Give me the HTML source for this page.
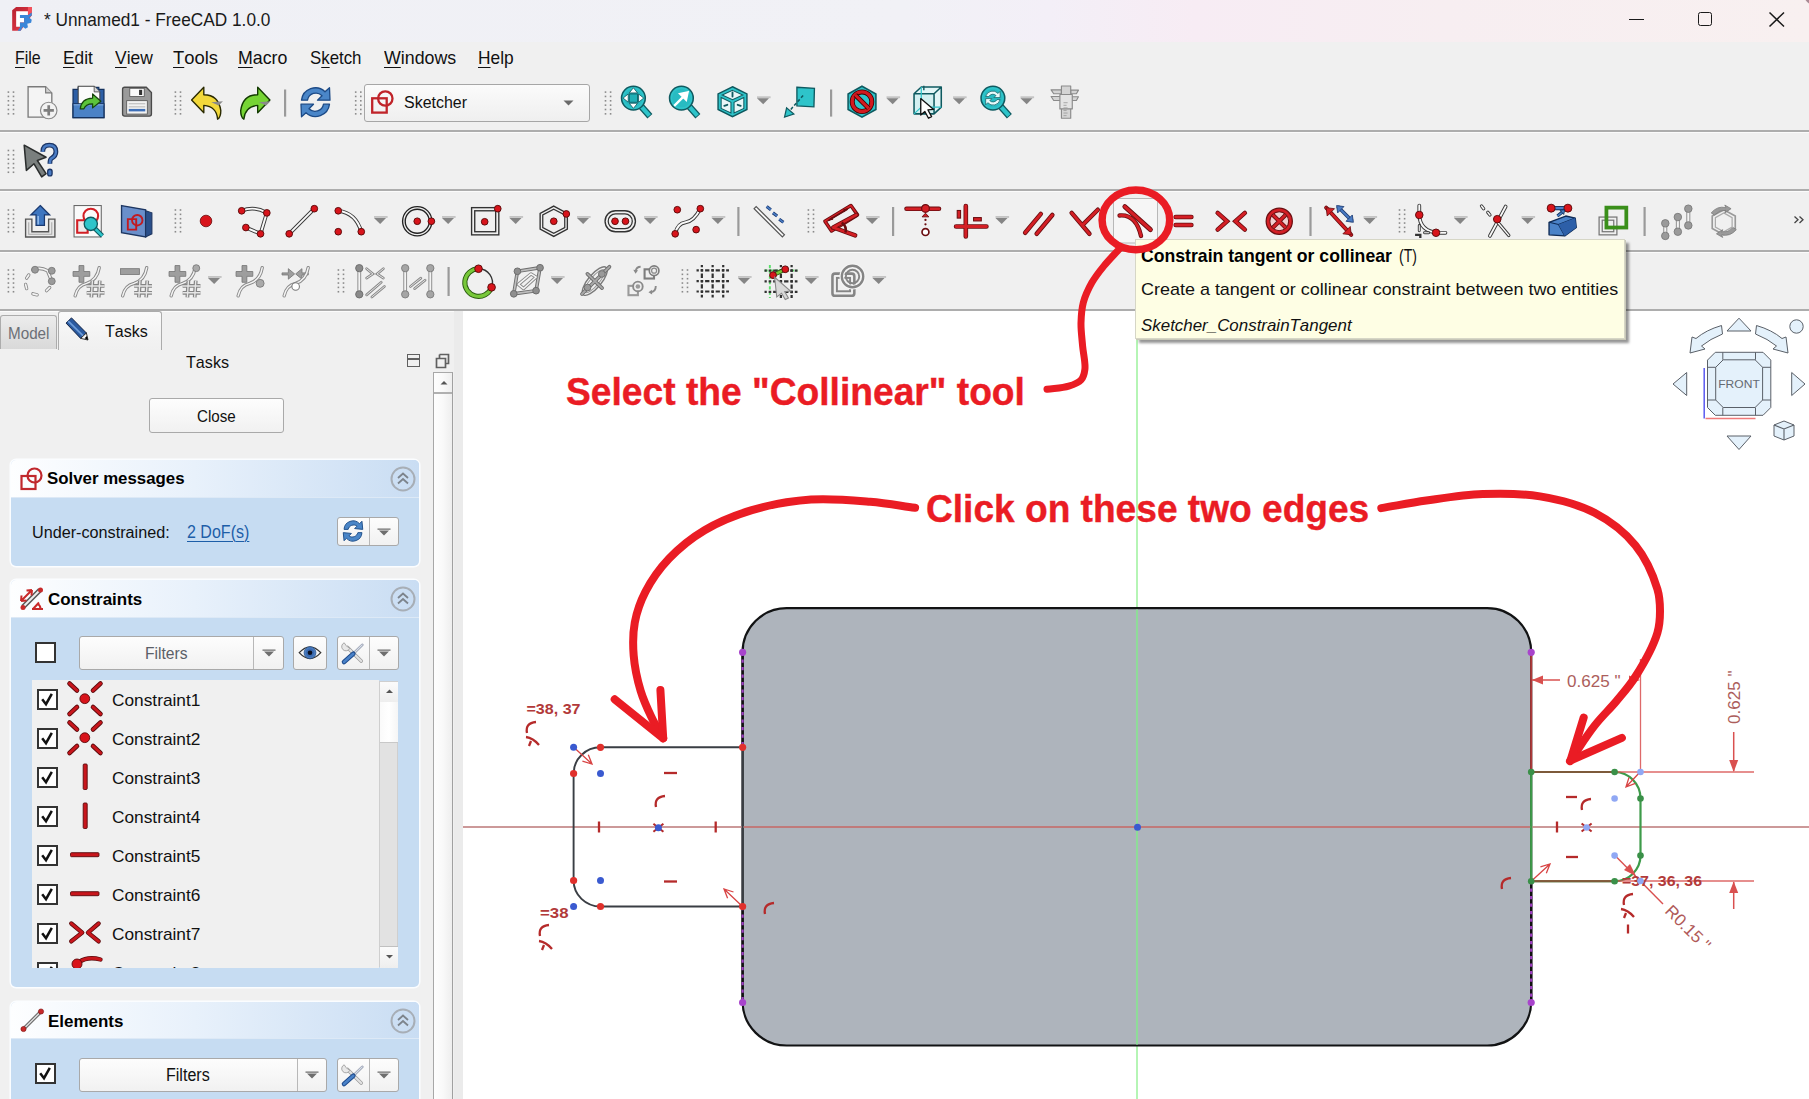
<!DOCTYPE html>
<html><head><meta charset="utf-8"><style>
html,body{margin:0;padding:0}
body{width:1809px;height:1099px;position:relative;overflow:hidden;background:#f0f0f0;font-family:"Liberation Sans",sans-serif}
svg{overflow:visible}
</style></head><body>
<div style="position:absolute;left:0;top:0;width:1809px;height:42px;background:linear-gradient(90deg,#eff0f5 0%,#f1f1f6 50%,#f3eff7 58%,#f7ecf4 66%,#f7eef1 80%,#f8f0f0 100%)"></div>
<svg style="position:absolute;left:0;top:0" width="40" height="40" viewBox="0 0 40 40">
<defs><linearGradient id="lgr" x1="0" y1="0" x2="1" y2="1"><stop offset="0" stop-color="#b8202e"/><stop offset="0.55" stop-color="#d23240"/><stop offset="1" stop-color="#ff5a64"/></linearGradient></defs>
<polygon points="12.17,10.28 16.15,7.10 31.75,7.10 31.75,15.38 20.61,30.66 12.17,30.66" fill="url(#lgr)"/>
<polygon points="27.93,7.10 31.75,7.10 31.75,12.51 27.93,15.06" fill="#f5505a"/>
<polygon points="16.15,11.24 27.93,11.24 27.93,15.06 19.97,15.06 19.97,17.92 24.11,17.92 24.11,22.38 19.97,22.38 19.97,26.84 16.15,26.84" fill="#ffffff"/>
<polygon points="19.97,15.06 28.25,15.06 31.75,12.51 31.75,15.38 29.20,17.61 31.75,19.83 31.11,22.70 27.29,23.66 27.93,27.16 25.38,28.75 22.83,26.84 20.61,30.66 17.74,30.66 19.97,27.48 19.97,22.38 24.11,22.38 24.11,17.92 19.97,17.92" fill="#3a86d8"/>
</svg>
<div style="position:absolute;left:43.50px;top:11.13px;font-family:'Liberation Sans',sans-serif;font-size:18.02px;line-height:1;font-weight:normal;font-style:normal;color:#1a1a1a;white-space:pre;font-kerning:none;transform:scaleX(0.9581);transform-origin:0 0;">* Unnamed1 - FreeCAD 1.0.0</div>
<div style="position:absolute;left:1629px;top:18.6px;width:15px;height:1.3px;background:#1a1a1a"></div><svg style="position:absolute;left:1804px;top:0" width="5" height="5"><path d="M1.5 0 H5 V3.5 Q3 2 1.5 0Z" fill="#a88a94"/></svg>
<div style="position:absolute;left:1698px;top:12px;width:11.5px;height:11.5px;border:1.8px solid #1a1a1a;border-radius:2.5px"></div>
<svg style="position:absolute;left:1768px;top:11px" width="18" height="17"><path d="M1.5 1.5 L16 15.5 M16 1.5 L1.5 15.5" stroke="#1a1a1a" stroke-width="1.5"/></svg>
<div style="position:absolute;left:14.60px;top:49.49px;font-family:'Liberation Sans',sans-serif;font-size:18.31px;line-height:1;font-weight:normal;font-style:normal;color:#111;white-space:pre;font-kerning:none;transform:scaleX(0.8711);transform-origin:0 0;"><span style="text-decoration:underline;text-underline-offset:2.5px;text-decoration-thickness:1px">F</span>ile</div>
<div style="position:absolute;left:62.70px;top:49.49px;font-family:'Liberation Sans',sans-serif;font-size:18.31px;line-height:1;font-weight:normal;font-style:normal;color:#111;white-space:pre;font-kerning:none;transform:scaleX(0.9444);transform-origin:0 0;"><span style="text-decoration:underline;text-underline-offset:2.5px;text-decoration-thickness:1px">E</span>dit</div>
<div style="position:absolute;left:115.00px;top:49.49px;font-family:'Liberation Sans',sans-serif;font-size:18.31px;line-height:1;font-weight:normal;font-style:normal;color:#111;white-space:pre;font-kerning:none;transform:scaleX(0.9540);transform-origin:0 0;"><span style="text-decoration:underline;text-underline-offset:2.5px;text-decoration-thickness:1px">V</span>iew</div>
<div style="position:absolute;left:173.30px;top:49.49px;font-family:'Liberation Sans',sans-serif;font-size:18.31px;line-height:1;font-weight:normal;font-style:normal;color:#111;white-space:pre;font-kerning:none;transform:scaleX(1.0060);transform-origin:0 0;"><span style="text-decoration:underline;text-underline-offset:2.5px;text-decoration-thickness:1px">T</span>ools</div>
<div style="position:absolute;left:238.30px;top:49.49px;font-family:'Liberation Sans',sans-serif;font-size:18.31px;line-height:1;font-weight:normal;font-style:normal;color:#111;white-space:pre;font-kerning:none;transform:scaleX(0.9710);transform-origin:0 0;"><span style="text-decoration:underline;text-underline-offset:2.5px;text-decoration-thickness:1px">M</span>acro</div>
<div style="position:absolute;left:310.00px;top:49.49px;font-family:'Liberation Sans',sans-serif;font-size:18.31px;line-height:1;font-weight:normal;font-style:normal;color:#111;white-space:pre;font-kerning:none;transform:scaleX(0.9199);transform-origin:0 0;">S<span style="text-decoration:underline;text-underline-offset:2.5px;text-decoration-thickness:1px">k</span>etch</div>
<div style="position:absolute;left:383.70px;top:49.49px;font-family:'Liberation Sans',sans-serif;font-size:18.31px;line-height:1;font-weight:normal;font-style:normal;color:#111;white-space:pre;font-kerning:none;transform:scaleX(0.9731);transform-origin:0 0;"><span style="text-decoration:underline;text-underline-offset:2.5px;text-decoration-thickness:1px">W</span>indows</div>
<div style="position:absolute;left:478.30px;top:49.49px;font-family:'Liberation Sans',sans-serif;font-size:18.31px;line-height:1;font-weight:normal;font-style:normal;color:#111;white-space:pre;font-kerning:none;transform:scaleX(0.9477);transform-origin:0 0;"><span style="text-decoration:underline;text-underline-offset:2.5px;text-decoration-thickness:1px">H</span>elp</div>
<div style="position:absolute;left:0;top:130px;width:1809px;height:2px;background:#adadad"></div>
<div style="position:absolute;left:0;top:132px;width:1809px;height:1px;background:#fbfbfb"></div>
<div style="position:absolute;left:0;top:189px;width:1809px;height:2px;background:#adadad"></div>
<div style="position:absolute;left:0;top:191px;width:1809px;height:1px;background:#fbfbfb"></div>
<div style="position:absolute;left:0;top:250px;width:1809px;height:2px;background:#adadad"></div>
<div style="position:absolute;left:0;top:252px;width:1809px;height:1px;background:#fbfbfb"></div>
<div style="position:absolute;left:0;top:309px;width:1809px;height:2px;background:#adadad"></div>
<div style="position:absolute;left:0;top:311px;width:1809px;height:1px;background:#fbfbfb"></div>
<svg style="position:absolute;left:0;top:0" width="1809" height="310" viewBox="0 0 1809 310">
<rect x="7.6000000000000005" y="91.3" width="1.6" height="1.6" fill="#8a8a8a"/><rect x="12.7" y="91.3" width="1.6" height="1.6" fill="#8a8a8a"/><rect x="7.6000000000000005" y="95.64999999999999" width="1.6" height="1.6" fill="#8a8a8a"/><rect x="12.7" y="95.64999999999999" width="1.6" height="1.6" fill="#8a8a8a"/><rect x="7.6000000000000005" y="100.0" width="1.6" height="1.6" fill="#8a8a8a"/><rect x="12.7" y="100.0" width="1.6" height="1.6" fill="#8a8a8a"/><rect x="7.6000000000000005" y="104.35" width="1.6" height="1.6" fill="#8a8a8a"/><rect x="12.7" y="104.35" width="1.6" height="1.6" fill="#8a8a8a"/><rect x="7.6000000000000005" y="108.7" width="1.6" height="1.6" fill="#8a8a8a"/><rect x="12.7" y="108.7" width="1.6" height="1.6" fill="#8a8a8a"/><rect x="7.6000000000000005" y="113.05" width="1.6" height="1.6" fill="#8a8a8a"/><rect x="12.7" y="113.05" width="1.6" height="1.6" fill="#8a8a8a"/>
<g transform="translate(25,85.2) scale(1.0312)"><path d="M3 1.5 H20 L26 7.5 V31 H3Z" fill="#f4f4f4" stroke="#7a7a7a" stroke-width="1.3"/><path d="M20 1.5 V7.5 H26" fill="#cfcfcf" stroke="#7a7a7a" stroke-width="1.1"/><circle cx="23" cy="24.5" r="8" fill="#f2f2f2" stroke="#8a8a8a" stroke-width="1.1"/><path d="M23 19.5 V29.5 M18 24.5 H28" stroke="#7e7e7e" stroke-width="2.6"/></g>
<g transform="translate(72,85.2) scale(1.0312)"><path d="M1 4 H6 V2 H26 V4 H31 V31.5 H1Z" fill="#2d5fa6" stroke="#14315e" stroke-width="1.2"/><path d="M6 1 H21.5 L27 6.5 V22 H6Z" fill="#fbfbfb" stroke="#444" stroke-width="1"/><path d="M21.5 1 V6.5 H27" fill="#d8d8d8" stroke="#444" stroke-width="0.8"/><path d="M1 18 H31 V31.5 H1Z" fill="#4b82c6" stroke="#14315e" stroke-width="1.2"/><path d="M1.5 19 H30.5" stroke="#8ab4e6" stroke-width="1"/><path d="M8 23 Q9 13 20 12.5 V8.5 L28 15.5 L20 22 V18 Q13 18 11.5 23Z" fill="#5cc43a" stroke="#17460c" stroke-width="1.2" stroke-linejoin="round"/></g>
<g transform="translate(120.5,85.2) scale(1.0312)"><path d="M2 4 Q2 2 4 2 H25 L30 7 V28 Q30 30 28 30 H4 Q2 30 2 28Z" fill="#9a9a9a" stroke="#4a4a4a" stroke-width="1.3"/><rect x="9" y="3" width="14" height="8" fill="#fafafa" stroke="#555" stroke-width="0.8"/><rect x="18" y="4.5" width="3" height="5" fill="#333"/><rect x="6" y="15" width="20" height="13" fill="#f2f2f2" stroke="#555" stroke-width="0.8"/><path d="M8 18 H24 M8 21 H24" stroke="#aaa" stroke-width="0.8"/><rect x="8" y="23" width="16" height="2.4" fill="#3d6fb8"/></g>
<rect x="174.6" y="91.3" width="1.6" height="1.6" fill="#8a8a8a"/><rect x="179.70000000000002" y="91.3" width="1.6" height="1.6" fill="#8a8a8a"/><rect x="174.6" y="95.64999999999999" width="1.6" height="1.6" fill="#8a8a8a"/><rect x="179.70000000000002" y="95.64999999999999" width="1.6" height="1.6" fill="#8a8a8a"/><rect x="174.6" y="100.0" width="1.6" height="1.6" fill="#8a8a8a"/><rect x="179.70000000000002" y="100.0" width="1.6" height="1.6" fill="#8a8a8a"/><rect x="174.6" y="104.35" width="1.6" height="1.6" fill="#8a8a8a"/><rect x="179.70000000000002" y="104.35" width="1.6" height="1.6" fill="#8a8a8a"/><rect x="174.6" y="108.7" width="1.6" height="1.6" fill="#8a8a8a"/><rect x="179.70000000000002" y="108.7" width="1.6" height="1.6" fill="#8a8a8a"/><rect x="174.6" y="113.05" width="1.6" height="1.6" fill="#8a8a8a"/><rect x="179.70000000000002" y="113.05" width="1.6" height="1.6" fill="#8a8a8a"/>
<g transform="translate(190,85.2) scale(1.0625)"><path d="M1.5 14 L13 2 V9 Q27 9 29 24 Q29 30 26 32 Q25 20 13 19 V26Z" fill="#f2d83a" stroke="#2a2a00" stroke-width="1.3" stroke-linejoin="round"/><path d="M20 16 L31 15 L27 19Z" fill="#8a8a8a"/></g>
<g transform="translate(237.5,85.2) scale(1.0625)"><path d="M30.5 14 L19 2 V9 Q5 9 3 24 Q3 30 6 32 Q7 20 19 19 V26Z" fill="#76d434" stroke="#123a00" stroke-width="1.3" stroke-linejoin="round"/><path d="M20 16 L31 15 L27 19Z" fill="#8a8a8a"/></g>
<rect x="284" y="89.5" width="2.2" height="27.099999999999994" fill="#9a9a9a"/>
<g transform="translate(299.5,86.2) scale(1.0000)"><path d="M2 14 A14 14 0 0 1 25.5 5.5 L30 1.5 L30.5 14 L18 14 L22.5 9.5 A8.5 8.5 0 0 0 8 14 Z" fill="#4a86c8" stroke="#1c4a86" stroke-width="1.3" stroke-linejoin="round"/><path d="M30 18 A14 14 0 0 1 6.5 26.5 L2 30.5 L1.5 18 L14 18 L9.5 22.5 A8.5 8.5 0 0 0 24 18 Z" fill="#4a86c8" stroke="#1c4a86" stroke-width="1.3" stroke-linejoin="round"/></g>
<rect x="354.9" y="91.3" width="1.6" height="1.6" fill="#8a8a8a"/><rect x="360.0" y="91.3" width="1.6" height="1.6" fill="#8a8a8a"/><rect x="354.9" y="95.64999999999999" width="1.6" height="1.6" fill="#8a8a8a"/><rect x="360.0" y="95.64999999999999" width="1.6" height="1.6" fill="#8a8a8a"/><rect x="354.9" y="100.0" width="1.6" height="1.6" fill="#8a8a8a"/><rect x="360.0" y="100.0" width="1.6" height="1.6" fill="#8a8a8a"/><rect x="354.9" y="104.35" width="1.6" height="1.6" fill="#8a8a8a"/><rect x="360.0" y="104.35" width="1.6" height="1.6" fill="#8a8a8a"/><rect x="354.9" y="108.7" width="1.6" height="1.6" fill="#8a8a8a"/><rect x="360.0" y="108.7" width="1.6" height="1.6" fill="#8a8a8a"/><rect x="354.9" y="113.05" width="1.6" height="1.6" fill="#8a8a8a"/><rect x="360.0" y="113.05" width="1.6" height="1.6" fill="#8a8a8a"/>
<rect x="604.7" y="91.3" width="1.6" height="1.6" fill="#8a8a8a"/><rect x="609.8" y="91.3" width="1.6" height="1.6" fill="#8a8a8a"/><rect x="604.7" y="95.64999999999999" width="1.6" height="1.6" fill="#8a8a8a"/><rect x="609.8" y="95.64999999999999" width="1.6" height="1.6" fill="#8a8a8a"/><rect x="604.7" y="100.0" width="1.6" height="1.6" fill="#8a8a8a"/><rect x="609.8" y="100.0" width="1.6" height="1.6" fill="#8a8a8a"/><rect x="604.7" y="104.35" width="1.6" height="1.6" fill="#8a8a8a"/><rect x="609.8" y="104.35" width="1.6" height="1.6" fill="#8a8a8a"/><rect x="604.7" y="108.7" width="1.6" height="1.6" fill="#8a8a8a"/><rect x="609.8" y="108.7" width="1.6" height="1.6" fill="#8a8a8a"/><rect x="604.7" y="113.05" width="1.6" height="1.6" fill="#8a8a8a"/><rect x="609.8" y="113.05" width="1.6" height="1.6" fill="#8a8a8a"/>
<g transform="translate(620,85.2) scale(1.0312)"><path d="M20 20 L29 30" stroke="#0f5a60" stroke-width="6.5" stroke-linecap="butt"/><path d="M20.5 20.5 L28.5 29.5" stroke="#2ec4ca" stroke-width="4"/><circle cx="13" cy="12.5" r="11.5" fill="#2ec4ca" stroke="#0f5a60" stroke-width="1.5"/><circle cx="13" cy="12.5" r="9" fill="#20b0b6" opacity="0.4"/><path d="M13 2.5 L17 7.5 H9Z M13 22.5 L17 17.5 H9Z M3 12.5 L8 8.5 V16.5Z M23 12.5 L18 8.5 V16.5Z" fill="#fff" stroke="#0f5a60" stroke-width="0.8"/><rect x="9" y="8.5" width="8" height="8" fill="#20b0b6" stroke="#0f5a60" stroke-width="0.8"/></g>
<g transform="translate(668,85.2) scale(1.0312)"><path d="M20 20 L29 30" stroke="#0f5a60" stroke-width="6.5" stroke-linecap="butt"/><path d="M20.5 20.5 L28.5 29.5" stroke="#2ec4ca" stroke-width="4"/><circle cx="13" cy="12.5" r="11.5" fill="#2ec4ca" stroke="#0f5a60" stroke-width="1.5"/><circle cx="13" cy="12.5" r="9" fill="#20b0b6" opacity="0.4"/><path d="M6 20 L15 11 M19 7 L12 8.5 L17.5 14Z" stroke="#fff" stroke-width="2.3" fill="#fff"/></g>
<g transform="translate(716,85.2) scale(1.0312)"><path d="M16 1.5 L30 8.5 V23.5 L16 30.5 L2 23.5 V8.5Z" fill="#2ec4ca" stroke="#0f5a60" stroke-width="1.4"/><path d="M16 5 L26 9.5 L16 14 L6 9.5Z M5 12 L14.5 16.5 V27 L5 22.5Z M27 12 L17.5 16.5 V27 L27 22.5Z" fill="#e8f7f8" stroke="#0f5a60" stroke-width="1"/><path d="M16 7 V11 M8 20 L11 19 M21 19 L24 20" stroke="#0f5a60" stroke-width="1.8" stroke-linecap="round"/></g>
<rect x="757" y="96.3" width="13.6" height="1.9" fill="#c4c4c4"/><path d="M757 98.2 H769 L763.2 104.3Z" fill="#858585"/>
<g transform="translate(783.5,85.2) scale(1.0312)"><path d="M13 2 L30 3 L29.5 21 L13 20Z" fill="#2ec4ca" stroke="#0f5a60" stroke-width="1.3"/><path d="M19 10 L4 27" stroke="#0f5a60" stroke-width="1.5" stroke-dasharray="3 2"/><path d="M1 31 L3 22 L10 28Z" fill="#2ec4ca" stroke="#0f5a60" stroke-width="1.2"/></g>
<rect x="830" y="89.5" width="2.2" height="27.099999999999994" fill="#9a9a9a"/>
<g transform="translate(845.5,85.2) scale(1.0312)"><path d="M16 1 L29.5 8.5 V23.5 L16 31 L2.5 23.5 V8.5Z" fill="#2ec4ca" stroke="#0f5a60" stroke-width="1.5"/><circle cx="16" cy="16" r="9.5" fill="none" stroke="#3a0000" stroke-width="4.8"/><circle cx="16" cy="16" r="9.5" fill="none" stroke="#d21a1f" stroke-width="3.2"/><path d="M9.5 9.5 L22.5 22.5" stroke="#3a0000" stroke-width="4.6"/><path d="M9.5 9.5 L22.5 22.5" stroke="#d21a1f" stroke-width="3"/></g>
<rect x="886.5" y="96.3" width="13.6" height="1.9" fill="#c4c4c4"/><path d="M886.5 98.2 H898.5 L892.7 104.3Z" fill="#858585"/>
<g transform="translate(912.5,85.2) scale(1.0312)"><path d="M1.5 8.3 H20.9 V27.8 H1.5Z" fill="#c6eff1" fill-opacity="0.7"/><path d="M1.5 8.3 L8.5 1.8 H27.9 L20.9 8.3Z M20.9 8.3 L27.9 1.8 V21.3 L20.9 27.8Z" fill="#dff6f7" fill-opacity="0.8"/><g fill="none" stroke="#0f5a60" stroke-width="1.5" stroke-linejoin="round"><path d="M1.5 8.3 H20.9 V27.8 H1.5Z M1.5 8.3 L8.5 1.8 H27.9 L20.9 8.3 M27.9 1.8 V21.3 L20.9 27.8"/></g><g fill="none" stroke="#2ec4ca" stroke-width="1.2"><path d="M8.5 1.8 V21.3 H27.9 M8.5 21.3 L1.5 27.8"/></g><path d="M11 0.5 V5" stroke="#0f5a60" stroke-width="1.4"/><path d="M8 13 L8 29 L12 25.5 L15.5 32 L18.5 30.5 L15 24 L20.5 23.5Z" fill="#fff" stroke="#111" stroke-width="1.3" stroke-linejoin="round"/></g>
<rect x="953" y="96.3" width="13.6" height="1.9" fill="#c4c4c4"/><path d="M953 98.2 H965 L959.2 104.3Z" fill="#858585"/>
<g transform="translate(979.5,85.2) scale(1.0312)"><path d="M20 20 L29 30" stroke="#0f5a60" stroke-width="6.5" stroke-linecap="butt"/><path d="M20.5 20.5 L28.5 29.5" stroke="#2ec4ca" stroke-width="4"/><circle cx="13" cy="12.5" r="11.5" fill="#2ec4ca" stroke="#0f5a60" stroke-width="1.5"/><circle cx="13" cy="12.5" r="9" fill="#20b0b6" opacity="0.4"/><path d="M6 11 A7 7 0 0 1 18 8 L20 6 L20 12 L14 12 L16 10 A4.5 4.5 0 0 0 9 11Z M20 14 A7 7 0 0 1 8 17 L6 19 L6 13 L12 13 L10 15 A4.5 4.5 0 0 0 17 14Z" fill="#e8fbfb" stroke="#0f5a60" stroke-width="0.7"/></g>
<rect x="1020.5" y="96.3" width="13.6" height="1.9" fill="#c4c4c4"/><path d="M1020.5 98.2 H1032.5 L1026.7 104.3Z" fill="#858585"/>
<g transform="translate(1047,85.2) scale(1.0312)"><g fill="#d4d4d4" stroke="#8a8a8a" stroke-width="1.1" stroke-linejoin="round"><path d="M4 4.5 H14 V8.3 H6.5Z"/><path d="M4 11 H14 V14.8 H6.5Z"/><path d="M23 4.8 H30.5 L28.5 8.3 H23Z"/><path d="M23 11.2 H30.5 L28.5 14.8 H23Z"/><path d="M14 0.8 H23 V32 H14Z"/><path d="M12.5 9 H24.5 V23 H12.5Z" fill="#e4e4e4"/></g><path d="M16 17 H20 M16 19.5 H19 M16 22 H20 M16 24.5 H19 M16 27 H20 M16 29.5 H19" stroke="#9a9a9a" stroke-width="0.8"/></g>
<rect x="7.6000000000000005" y="149.7" width="1.6" height="1.6" fill="#8a8a8a"/><rect x="12.7" y="149.7" width="1.6" height="1.6" fill="#8a8a8a"/><rect x="7.6000000000000005" y="154.04999999999998" width="1.6" height="1.6" fill="#8a8a8a"/><rect x="12.7" y="154.04999999999998" width="1.6" height="1.6" fill="#8a8a8a"/><rect x="7.6000000000000005" y="158.39999999999998" width="1.6" height="1.6" fill="#8a8a8a"/><rect x="12.7" y="158.39999999999998" width="1.6" height="1.6" fill="#8a8a8a"/><rect x="7.6000000000000005" y="162.75" width="1.6" height="1.6" fill="#8a8a8a"/><rect x="12.7" y="162.75" width="1.6" height="1.6" fill="#8a8a8a"/><rect x="7.6000000000000005" y="167.1" width="1.6" height="1.6" fill="#8a8a8a"/><rect x="12.7" y="167.1" width="1.6" height="1.6" fill="#8a8a8a"/><rect x="7.6000000000000005" y="171.45" width="1.6" height="1.6" fill="#8a8a8a"/><rect x="12.7" y="171.45" width="1.6" height="1.6" fill="#8a8a8a"/>
<g transform="translate(22,143) scale(1.0938)"><path d="M2 2 L22 13 L14 16 L22 28 L18 31 L11 19 L4 25Z" fill="#7a7f7e" stroke="#2a2d2d" stroke-width="1.4" stroke-linejoin="round"/><path d="M19 8 Q19 2 25 2 Q31 2 31 8 Q31 12 27 14 Q25.5 15 25.5 19" fill="none" stroke="#1b3566" stroke-width="4.4"/><path d="M19 8 Q19 2 25 2 Q31 2 31 8 Q31 12 27 14 Q25.5 15 25.5 19" fill="none" stroke="#4a7cc4" stroke-width="2.2"/><rect x="23.5" y="24" width="4" height="6" rx="2" fill="#4a7cc4" stroke="#1b3566" stroke-width="1.2"/></g>
<rect x="7.6000000000000005" y="209.2" width="1.6" height="1.6" fill="#8a8a8a"/><rect x="12.7" y="209.2" width="1.6" height="1.6" fill="#8a8a8a"/><rect x="7.6000000000000005" y="213.54999999999998" width="1.6" height="1.6" fill="#8a8a8a"/><rect x="12.7" y="213.54999999999998" width="1.6" height="1.6" fill="#8a8a8a"/><rect x="7.6000000000000005" y="217.89999999999998" width="1.6" height="1.6" fill="#8a8a8a"/><rect x="12.7" y="217.89999999999998" width="1.6" height="1.6" fill="#8a8a8a"/><rect x="7.6000000000000005" y="222.25" width="1.6" height="1.6" fill="#8a8a8a"/><rect x="12.7" y="222.25" width="1.6" height="1.6" fill="#8a8a8a"/><rect x="7.6000000000000005" y="226.6" width="1.6" height="1.6" fill="#8a8a8a"/><rect x="12.7" y="226.6" width="1.6" height="1.6" fill="#8a8a8a"/><rect x="7.6000000000000005" y="230.95" width="1.6" height="1.6" fill="#8a8a8a"/><rect x="12.7" y="230.95" width="1.6" height="1.6" fill="#8a8a8a"/>
<g transform="translate(23.5,204.5) scale(1.0469)"><path d="M2 14 H8 V26 H24 V14 H30 V31 H2Z" fill="#e8e8e8" stroke="#555" stroke-width="1.3"/><path d="M5 17 V28.5 H27 V17" fill="none" stroke="#aaa" stroke-width="1"/><path d="M16 1 L25 10 H20 V20 H12 V10 H7Z" fill="#3e76c0" stroke="#1b3a70" stroke-width="1.2"/><path d="M14 11 V19" stroke="#9ac0ee" stroke-width="1.4"/></g>
<g transform="translate(73,204.5) scale(1.0469)"><rect x="1" y="1" width="26" height="30" fill="#fafafa" stroke="#666" stroke-width="1"/><path d="M4 15 H14 V27 H4Z" fill="#ececec" stroke="#d21f25" stroke-width="2"/><circle cx="17" cy="11" r="7" fill="none" stroke="#d21f25" stroke-width="2"/><path d="M20 22 L28 30" stroke="#0f5a60" stroke-width="4.5"/><path d="M20 22 L28 30" stroke="#2ec4ca" stroke-width="2.5"/><circle cx="17" cy="18.5" r="6.3" fill="#2ec4ca" stroke="#0f5a60" stroke-width="1.3"/></g>
<g transform="translate(120.5,204.5) scale(1.0469)"><path d="M1 1 L24 5 L24 31 L1 27Z" fill="#6a8fca" stroke="#1c3560" stroke-width="1.3"/><path d="M24 6 L30 8 V28 L24 31Z" fill="#2a4f8a" stroke="#1c3560" stroke-width="1"/><path d="M7 14 H15 V24 H7Z" fill="none" stroke="#c21a20" stroke-width="1.8"/><circle cx="16" cy="15" r="5" fill="none" stroke="#c21a20" stroke-width="1.8"/></g>
<rect x="174.6" y="209.2" width="1.6" height="1.6" fill="#8a8a8a"/><rect x="179.70000000000002" y="209.2" width="1.6" height="1.6" fill="#8a8a8a"/><rect x="174.6" y="213.54999999999998" width="1.6" height="1.6" fill="#8a8a8a"/><rect x="179.70000000000002" y="213.54999999999998" width="1.6" height="1.6" fill="#8a8a8a"/><rect x="174.6" y="217.89999999999998" width="1.6" height="1.6" fill="#8a8a8a"/><rect x="179.70000000000002" y="217.89999999999998" width="1.6" height="1.6" fill="#8a8a8a"/><rect x="174.6" y="222.25" width="1.6" height="1.6" fill="#8a8a8a"/><rect x="179.70000000000002" y="222.25" width="1.6" height="1.6" fill="#8a8a8a"/><rect x="174.6" y="226.6" width="1.6" height="1.6" fill="#8a8a8a"/><rect x="179.70000000000002" y="226.6" width="1.6" height="1.6" fill="#8a8a8a"/><rect x="174.6" y="230.95" width="1.6" height="1.6" fill="#8a8a8a"/><rect x="179.70000000000002" y="230.95" width="1.6" height="1.6" fill="#8a8a8a"/>
<circle cx="206" cy="221" r="5.8" fill="#d8141b" stroke="#6a0a0a" stroke-width="0.8"/>
<g transform="translate(237.5,204.5) scale(1.0469)"><path d="M4 6 Q16 1 28 8 L22 28 L8 22" fill="none" stroke="#3a3a3a" stroke-width="3.6" stroke-linecap="round"/><path d="M4 6 Q16 1 28 8 L22 28 L8 22" fill="none" stroke="#fafafa" stroke-width="1.8" stroke-linecap="round"/><circle cx="4" cy="6" r="3.2" fill="#d8141b" stroke="#5a0a0a" stroke-width="0.9"/><circle cx="28" cy="8" r="3.2" fill="#d8141b" stroke="#5a0a0a" stroke-width="0.9"/><circle cx="22" cy="28" r="3.2" fill="#d8141b" stroke="#5a0a0a" stroke-width="0.9"/><circle cx="8" cy="22" r="3.2" fill="#d8141b" stroke="#5a0a0a" stroke-width="0.9"/></g>
<g transform="translate(285,204.5) scale(1.0469)"><path d="M4 28 L28 4" fill="none" stroke="#3a3a3a" stroke-width="3.6" stroke-linecap="round"/><path d="M4 28 L28 4" fill="none" stroke="#fafafa" stroke-width="1.8" stroke-linecap="round"/><circle cx="4" cy="28" r="3.2" fill="#d8141b" stroke="#5a0a0a" stroke-width="0.9"/><circle cx="28" cy="4" r="3.2" fill="#d8141b" stroke="#5a0a0a" stroke-width="0.9"/></g>
<g transform="translate(333,204.5) scale(1.0469)"><path d="M5 6 Q22 8 27 26" fill="none" stroke="#3a3a3a" stroke-width="3.6" stroke-linecap="round"/><path d="M5 6 Q22 8 27 26" fill="none" stroke="#fafafa" stroke-width="1.8" stroke-linecap="round"/><circle cx="5" cy="6" r="3.2" fill="#d8141b" stroke="#5a0a0a" stroke-width="0.9"/><circle cx="27" cy="26" r="3.2" fill="#d8141b" stroke="#5a0a0a" stroke-width="0.9"/><circle cx="5" cy="26" r="3.2" fill="#d8141b" stroke="#5a0a0a" stroke-width="0.9"/></g>
<g transform="translate(400.5,204.5) scale(1.0469)"><circle cx="16" cy="16" r="14" fill="none" stroke="#222" stroke-width="1.3"/><circle cx="16" cy="16" r="11.5" fill="none" stroke="#222" stroke-width="1.3"/><circle cx="16" cy="16" r="3.2" fill="#d8141b" stroke="#5a0a0a" stroke-width="0.9"/><circle cx="29.5" cy="16" r="3.2" fill="#d8141b" stroke="#5a0a0a" stroke-width="0.9"/></g>
<g transform="translate(469.5,204.5) scale(1.0469)"><rect x="2" y="3" width="26" height="26" fill="none" stroke="#333" stroke-width="1.3"/><rect x="5" y="6" width="20" height="20" fill="none" stroke="#333" stroke-width="1.3"/><circle cx="14.5" cy="16.5" r="3.2" fill="#d8141b" stroke="#5a0a0a" stroke-width="0.9"/><circle cx="27" cy="4" r="3.2" fill="#d8141b" stroke="#5a0a0a" stroke-width="0.9"/></g>
<g transform="translate(537,204.5) scale(1.0469)"><path d="M16 1.5 L29 8.5 V23.5 L16 30.5 L3 23.5 V8.5Z" fill="none" stroke="#333" stroke-width="1.3"/><path d="M16 4.5 L26.5 10 V22 L16 27.5 L5.5 22 V10Z" fill="none" stroke="#333" stroke-width="1.2"/><circle cx="16" cy="16" r="3.2" fill="#d8141b" stroke="#5a0a0a" stroke-width="0.9"/><circle cx="28" cy="9" r="3.2" fill="#d8141b" stroke="#5a0a0a" stroke-width="0.9"/></g>
<g transform="translate(603.5,204.5) scale(1.0469)"><rect x="1.5" y="6" width="29" height="20" rx="10" fill="none" stroke="#333" stroke-width="1.3"/><rect x="4.5" y="9" width="23" height="14" rx="7" fill="none" stroke="#333" stroke-width="1.2"/><circle cx="11" cy="16" r="3.2" fill="#d8141b" stroke="#5a0a0a" stroke-width="0.9"/><circle cx="21" cy="16" r="3.2" fill="#d8141b" stroke="#5a0a0a" stroke-width="0.9"/></g>
<g transform="translate(671,204.5) scale(1.0469)"><path d="M4 28 Q6 18 14 17 Q22 16 28 4" fill="none" stroke="#3a3a3a" stroke-width="3.6" stroke-linecap="round"/><path d="M4 28 Q6 18 14 17 Q22 16 28 4" fill="none" stroke="#fafafa" stroke-width="1.8" stroke-linecap="round"/><circle cx="4" cy="28" r="3.2" fill="#d8141b" stroke="#5a0a0a" stroke-width="0.9"/><circle cx="28" cy="4" r="3.2" fill="#d8141b" stroke="#5a0a0a" stroke-width="0.9"/><circle cx="6" cy="5" r="3.2" fill="#d8141b" stroke="#5a0a0a" stroke-width="0.9"/><circle cx="24" cy="24" r="3.2" fill="#d8141b" stroke="#5a0a0a" stroke-width="0.9"/></g>
<rect x="374" y="216.0" width="13.6" height="1.9" fill="#c4c4c4"/><path d="M374 217.9 H386 L380.2 224.0Z" fill="#858585"/>
<rect x="442" y="216.0" width="13.6" height="1.9" fill="#c4c4c4"/><path d="M442 217.9 H454 L448.2 224.0Z" fill="#858585"/>
<rect x="509.5" y="216.0" width="13.6" height="1.9" fill="#c4c4c4"/><path d="M509.5 217.9 H521.5 L515.7 224.0Z" fill="#858585"/>
<rect x="577" y="216.0" width="13.6" height="1.9" fill="#c4c4c4"/><path d="M577 217.9 H589 L583.2 224.0Z" fill="#858585"/>
<rect x="644" y="216.0" width="13.6" height="1.9" fill="#c4c4c4"/><path d="M644 217.9 H656 L650.2 224.0Z" fill="#858585"/>
<rect x="711.7" y="216.0" width="13.6" height="1.9" fill="#c4c4c4"/><path d="M711.7 217.9 H723.7 L717.9000000000001 224.0Z" fill="#858585"/>
<rect x="737.3" y="207" width="2.2" height="29" fill="#9a9a9a"/>
<g transform="translate(752,204.5) scale(1.0469)"><path d="M2 4 L4 2 L31 29 L29 31Z" fill="#f4f4f4" stroke="#555" stroke-width="1.1"/><path d="M14 2 L18 5 M20 8 L24 11 M26 14 L30 17" stroke="#1b3a70" stroke-width="3"/><path d="M14 2 L18 5 M20 8 L24 11 M26 14 L30 17" stroke="#4a7cc4" stroke-width="1.6"/></g>
<rect x="807.6" y="209.2" width="1.6" height="1.6" fill="#8a8a8a"/><rect x="812.6999999999999" y="209.2" width="1.6" height="1.6" fill="#8a8a8a"/><rect x="807.6" y="213.54999999999998" width="1.6" height="1.6" fill="#8a8a8a"/><rect x="812.6999999999999" y="213.54999999999998" width="1.6" height="1.6" fill="#8a8a8a"/><rect x="807.6" y="217.89999999999998" width="1.6" height="1.6" fill="#8a8a8a"/><rect x="812.6999999999999" y="217.89999999999998" width="1.6" height="1.6" fill="#8a8a8a"/><rect x="807.6" y="222.25" width="1.6" height="1.6" fill="#8a8a8a"/><rect x="812.6999999999999" y="222.25" width="1.6" height="1.6" fill="#8a8a8a"/><rect x="807.6" y="226.6" width="1.6" height="1.6" fill="#8a8a8a"/><rect x="812.6999999999999" y="226.6" width="1.6" height="1.6" fill="#8a8a8a"/><rect x="807.6" y="230.95" width="1.6" height="1.6" fill="#8a8a8a"/><rect x="812.6999999999999" y="230.95" width="1.6" height="1.6" fill="#8a8a8a"/>
<g transform="translate(824,204.5) scale(1.0469)"><path d="M0.9 16 L25.7 0.95 L32 9.9 L7.2 25.3Z" fill="none" stroke="#6a0d10" stroke-width="3.4" stroke-linejoin="round"/><path d="M0.9 16 L25.7 0.95 L32 9.9 L7.2 25.3Z" fill="none" stroke="#d41f25" stroke-width="1.6" stroke-linejoin="round"/><path d="M8.8 22 L30.9 9.9 M8.8 22 L29.8 29.5" fill="none" stroke="#6a0d10" stroke-width="4.2" stroke-linecap="round"/><path d="M8.8 22 L30.9 9.9 M8.8 22 L29.8 29.5" fill="none" stroke="#d41f25" stroke-width="2.6" stroke-linecap="round"/><path d="M4.5 15 L22.5 4.3" stroke="#6a0d10" stroke-width="1.6"/><path d="M3.5 15.6 L8 11.8 L8.8 14.6Z M23.5 3.6 L19.2 7.4 L18.4 4.6Z" fill="#6a0d10"/><path d="M17 17.2 Q22 21 20.5 26.8" fill="none" stroke="#6a0d10" stroke-width="2.4"/></g>
<rect x="866" y="216.0" width="13.6" height="1.9" fill="#c4c4c4"/><path d="M866 217.9 H878 L872.2 224.0Z" fill="#858585"/>
<rect x="892" y="207" width="2.2" height="29" fill="#9a9a9a"/>
<g transform="translate(906,204.5) scale(1.0469)"><path d="M0.5 4.1 H31.5" stroke="#6a0d10" stroke-width="4.4" stroke-linecap="round"/><path d="M0.5 4.1 H31.5" stroke="#d41f25" stroke-width="2.6" stroke-linecap="round"/><circle cx="18.6" cy="3.8" r="3.7" fill="#d41f25" stroke="#6a0d10" stroke-width="1.1"/><path d="M18.6 8.3 L15.4 11.8 H21.8Z" fill="#d41f25" stroke="#6a0d10" stroke-width="0.9"/><circle cx="18.6" cy="14.7" r="1.1" fill="#6a0d10"/><circle cx="18.6" cy="18.9" r="1.1" fill="#6a0d10"/><circle cx="18.6" cy="26.3" r="3.3" fill="#fff" stroke="#6a0d10" stroke-width="1.6"/></g>
<g transform="translate(954.5,204.5) scale(1.0469)"><path d="M1.5 21 H30.5 M10.8 1.5 V30.5" fill="none" stroke="#6a0d10" stroke-width="4.4" stroke-linecap="round"/><path d="M1.5 21 H30.5 M10.8 1.5 V30.5" fill="none" stroke="#d41f25" stroke-width="2.8000000000000003" stroke-linecap="round"/><rect x="2.6" y="5.7" width="3.2" height="7.3" fill="#d41f25" stroke="#6a0d10" stroke-width="1"/><rect x="18.2" y="12.5" width="7.4" height="3.2" fill="#d41f25" stroke="#6a0d10" stroke-width="1"/></g>
<rect x="995.5" y="216.0" width="13.6" height="1.9" fill="#c4c4c4"/><path d="M995.5 217.9 H1007.5 L1001.7 224.0Z" fill="#858585"/>
<g transform="translate(1022,204.5) scale(1.0469)"><path d="M3 27 L18 9 M14 28 L29 10" fill="none" stroke="#6a0d10" stroke-width="4.3" stroke-linecap="round"/><path d="M3 27 L18 9 M14 28 L29 10" fill="none" stroke="#d41f25" stroke-width="2.6999999999999997" stroke-linecap="round"/></g>
<g transform="translate(1068.5,204.5) scale(1.0469)"><path d="M3 8 L20 28 M14 19 L28 5" fill="none" stroke="#6a0d10" stroke-width="4.3" stroke-linecap="round"/><path d="M3 8 L20 28 M14 19 L28 5" fill="none" stroke="#d41f25" stroke-width="2.6999999999999997" stroke-linecap="round"/></g>
<rect x="1113.5" y="198.5" width="44" height="44.5" rx="2" fill="#f6f6f6" stroke="#b8b8b8" stroke-width="1"/>
<g transform="translate(1118,204.5) scale(1.0469)"><path d="M6.5 2 L31 24" fill="none" stroke="#6a0d10" stroke-width="4.6" stroke-linecap="round"/><path d="M6.5 2 L31 24" fill="none" stroke="#d41f25" stroke-width="2.9999999999999996" stroke-linecap="round"/><path d="M1.5 10.5 Q17 9 22 30" fill="none" stroke="#6a0d10" stroke-width="4.2" stroke-linecap="round"/><path d="M1.5 10.5 Q17 9 22 30" fill="none" stroke="#d41f25" stroke-width="2.6" stroke-linecap="round"/></g>
<g transform="translate(1172,204.5) scale(1.0469)"><path d="M3.5 12 H18.5 M3.5 19.6 H18.5" fill="none" stroke="#6a0d10" stroke-width="4.4" stroke-linecap="round"/><path d="M3.5 12 H18.5 M3.5 19.6 H18.5" fill="none" stroke="#d41f25" stroke-width="2.8000000000000003" stroke-linecap="round"/></g>
<g transform="translate(1214.5,204.5) scale(1.0469)"><path d="M3 8 L12 16 L3 24 M29 8 L20 16 L29 24" fill="none" stroke="#6a0d10" stroke-width="4.3" stroke-linecap="round"/><path d="M3 8 L12 16 L3 24 M29 8 L20 16 L29 24" fill="none" stroke="#d41f25" stroke-width="2.6999999999999997" stroke-linecap="round"/></g>
<g transform="translate(1262.5,204.5) scale(1.0469)"><circle cx="16" cy="16" r="12.5" fill="#d41f25" stroke="#6a0d10" stroke-width="1.2"/><circle cx="16" cy="16" r="9" fill="#f0d0d0" stroke="#6a0d10" stroke-width="1"/><path d="M10 10 L22 22 M22 10 L10 22" stroke="#6a0d10" stroke-width="4"/><path d="M10 10 L22 22 M22 10 L10 22" stroke="#d41f25" stroke-width="2.4"/></g>
<rect x="1309.4" y="207" width="2.2" height="29" fill="#9a9a9a"/>
<g transform="translate(1323,204.5) scale(1.0469)"><path d="M3 3 L27 29" fill="none" stroke="#6a0d10" stroke-width="3.8" stroke-linecap="round"/><path d="M3 3 L27 29" fill="none" stroke="#d41f25" stroke-width="2.1999999999999997" stroke-linecap="round"/><path d="M3 3 L11 4 L4 11Z M27 29 L19 28 L26 21Z" fill="#d41f25" stroke="#6a0d10" stroke-width="0.8"/><path d="M14 2 L28 16" stroke="#1b3a70" stroke-width="3.4"/><path d="M14 2 L28 16" stroke="#4a7cc4" stroke-width="1.8"/><path d="M13 1 L20 2 L14 8Z M29 17 L22 16 L28 10Z" fill="#4a7cc4" stroke="#1b3a70" stroke-width="0.8"/></g>
<rect x="1363.5" y="216.0" width="13.6" height="1.9" fill="#c4c4c4"/><path d="M1363.5 217.9 H1375.5 L1369.7 224.0Z" fill="#858585"/>
<rect x="1398.7" y="209.2" width="1.6" height="1.6" fill="#8a8a8a"/><rect x="1403.8" y="209.2" width="1.6" height="1.6" fill="#8a8a8a"/><rect x="1398.7" y="213.54999999999998" width="1.6" height="1.6" fill="#8a8a8a"/><rect x="1403.8" y="213.54999999999998" width="1.6" height="1.6" fill="#8a8a8a"/><rect x="1398.7" y="217.89999999999998" width="1.6" height="1.6" fill="#8a8a8a"/><rect x="1403.8" y="217.89999999999998" width="1.6" height="1.6" fill="#8a8a8a"/><rect x="1398.7" y="222.25" width="1.6" height="1.6" fill="#8a8a8a"/><rect x="1403.8" y="222.25" width="1.6" height="1.6" fill="#8a8a8a"/><rect x="1398.7" y="226.6" width="1.6" height="1.6" fill="#8a8a8a"/><rect x="1403.8" y="226.6" width="1.6" height="1.6" fill="#8a8a8a"/><rect x="1398.7" y="230.95" width="1.6" height="1.6" fill="#8a8a8a"/><rect x="1403.8" y="230.95" width="1.6" height="1.6" fill="#8a8a8a"/>
<g transform="translate(1413,204.5) scale(1.0469)"><path d="M6 1 V9 Q6 26 25 27 H31" fill="none" stroke="#3a3a3a" stroke-width="3.6" stroke-linecap="round"/><path d="M6 1 V9 Q6 26 25 27 H31" fill="none" stroke="#fafafa" stroke-width="1.8" stroke-linecap="round"/><path d="M6 20 V25 M11 27 H15" fill="none" stroke="#3a3a3a" stroke-width="2.8" stroke-linecap="round"/><path d="M6 20 V25 M11 27 H15" fill="none" stroke="#fafafa" stroke-width="0.9999999999999998" stroke-linecap="round"/><path d="M2 29 H7 V32" fill="none" stroke="#333" stroke-width="2.2"/><circle cx="6" cy="10" r="3.6" fill="#d8141b" stroke="#5a0a0a" stroke-width="0.9"/><circle cx="22" cy="27" r="3.6" fill="#d8141b" stroke="#5a0a0a" stroke-width="0.9"/></g>
<rect x="1454" y="216.0" width="13.6" height="1.9" fill="#c4c4c4"/><path d="M1454 217.9 H1466 L1460.2 224.0Z" fill="#858585"/>
<g transform="translate(1480.5,204.5) scale(1.0469)"><path d="M9 30 L24 2" fill="none" stroke="#3a3a3a" stroke-width="3.6" stroke-linecap="round"/><path d="M9 30 L24 2" fill="none" stroke="#fafafa" stroke-width="1.8" stroke-linecap="round"/><path d="M1 1.5 L3 4 M7 7.5 L9 10 M14 14 L27 29.5" fill="none" stroke="#3a3a3a" stroke-width="3.2" stroke-linecap="round"/><path d="M1 1.5 L3 4 M7 7.5 L9 10 M14 14 L27 29.5" fill="none" stroke="#fafafa" stroke-width="1.4000000000000001" stroke-linecap="round"/><circle cx="16" cy="14" r="3.6" fill="#d8141b" stroke="#5a0a0a" stroke-width="0.9"/></g>
<rect x="1521.5" y="216.0" width="13.6" height="1.9" fill="#c4c4c4"/><path d="M1521.5 217.9 H1533.5 L1527.7 224.0Z" fill="#858585"/>
<g transform="translate(1548,204.5) scale(1.0469)"><path d="M1 17 L17 11 L26 13 L27 22 L16 30 L1 29Z" fill="#4a82c8" stroke="#0e2a55" stroke-width="1.3" stroke-linejoin="round"/><path d="M1 17 L10 19 L26 13 M10 19 L16 30" fill="none" stroke="#0e2a55" stroke-width="1"/><path d="M10 19 L26 13 L27 22 L16 30Z" fill="#2d5fa8"/><path d="M3 3.5 H19" stroke="#0e2a55" stroke-width="4"/><path d="M3 3.5 H19" stroke="#4a82c8" stroke-width="2.2"/><circle cx="3" cy="3.5" r="3.8" fill="#d8141b" stroke="#5a0a0a" stroke-width="0.9"/><circle cx="19" cy="3.5" r="3.8" fill="#d8141b" stroke="#5a0a0a" stroke-width="0.9"/><path d="M9 11 L14 7" stroke="#0e2a55" stroke-width="3"/><path d="M9 11 L14 7" stroke="#4a82c8" stroke-width="1.5"/><path d="M11.5 5.5 L16 5 L15 9.5Z" fill="#4a82c8" stroke="#0e2a55" stroke-width="0.8"/></g>
<g transform="translate(1597,204.5) scale(1.0469)"><rect x="2" y="12" width="17" height="17" fill="none" stroke="#777" stroke-width="1.2"/><rect x="5" y="15" width="11" height="11" fill="none" stroke="#777" stroke-width="1.2"/><rect x="9" y="3" width="19" height="19" fill="none" stroke="#3a8f1a" stroke-width="3.6"/></g>
<rect x="1643.5" y="207" width="2.2" height="29" fill="#9a9a9a"/>
<g transform="translate(1659,204.5) scale(1.0469)"><path d="M6 30 V18 M18 26 V12 M28 20 V4" fill="none" stroke="#8a8a8a" stroke-width="3.8" stroke-linecap="round"/><path d="M6 30 V18 M18 26 V12 M28 20 V4" fill="none" stroke="#f4f4f4" stroke-width="1.9999999999999998" stroke-linecap="round"/><circle cx="6" cy="18" r="3.6" fill="#9a9a9a" stroke="#777" stroke-width="0.8"/><circle cx="6" cy="30" r="3.6" fill="#9a9a9a" stroke="#777" stroke-width="0.8"/><circle cx="18" cy="12" r="3.6" fill="#9a9a9a" stroke="#777" stroke-width="0.8"/><circle cx="18" cy="26" r="3.6" fill="#9a9a9a" stroke="#777" stroke-width="0.8"/><circle cx="28" cy="4" r="3.6" fill="#9a9a9a" stroke="#777" stroke-width="0.8"/><circle cx="28" cy="20" r="3.6" fill="#9a9a9a" stroke="#777" stroke-width="0.8"/></g>
<g transform="translate(1707,204.5) scale(1.0469)"><path d="M16 5 L27 11 V23 L16 29 L5 23 V11Z" fill="none" stroke="#999" stroke-width="1.6"/><path d="M16 8 L24 12.5 V21.5 L16 26 L8 21.5 V12.5Z" fill="none" stroke="#aaa" stroke-width="1.2"/><path d="M4 8 Q10 1 18 3 L17 0.5 L23 4 L17 8 L18 5.5 Q12 5 7 10Z M28 24 Q22 31 14 29 L15 31.5 L9 28 L15 24 L14 26.5 Q20 27 25 22Z" fill="#9a9a9a" stroke="#777" stroke-width="0.7"/></g>
<path d="M1794.5 216.5 L1798 219.8 L1794.5 223 M1799.5 216.5 L1803 219.8 L1799.5 223" fill="none" stroke="#444" stroke-width="1.3"/>
<rect x="7.6000000000000005" y="269.2" width="1.6" height="1.6" fill="#8a8a8a"/><rect x="12.7" y="269.2" width="1.6" height="1.6" fill="#8a8a8a"/><rect x="7.6000000000000005" y="273.55" width="1.6" height="1.6" fill="#8a8a8a"/><rect x="12.7" y="273.55" width="1.6" height="1.6" fill="#8a8a8a"/><rect x="7.6000000000000005" y="277.9" width="1.6" height="1.6" fill="#8a8a8a"/><rect x="12.7" y="277.9" width="1.6" height="1.6" fill="#8a8a8a"/><rect x="7.6000000000000005" y="282.25" width="1.6" height="1.6" fill="#8a8a8a"/><rect x="12.7" y="282.25" width="1.6" height="1.6" fill="#8a8a8a"/><rect x="7.6000000000000005" y="286.59999999999997" width="1.6" height="1.6" fill="#8a8a8a"/><rect x="12.7" y="286.59999999999997" width="1.6" height="1.6" fill="#8a8a8a"/><rect x="7.6000000000000005" y="290.95" width="1.6" height="1.6" fill="#8a8a8a"/><rect x="12.7" y="290.95" width="1.6" height="1.6" fill="#8a8a8a"/>
<g transform="translate(23.5,264.5) scale(1.0469)"><path d="M9 5 Q16 2 23 6 L27 16" fill="none" stroke="#8a8a8a" stroke-width="3.4" stroke-linecap="round"/><path d="M9 5 Q16 2 23 6 L27 16" fill="none" stroke="#f4f4f4" stroke-width="1.5999999999999999" stroke-linecap="round"/><circle cx="11" cy="5" r="3.3" fill="#9a9a9a" stroke="#777" stroke-width="0.8"/><circle cx="27" cy="6" r="3.3" fill="#9a9a9a" stroke="#777" stroke-width="0.8"/><circle cx="27" cy="16" r="3.3" fill="#9a9a9a" stroke="#777" stroke-width="0.8"/><path d="M5 10 L3 13 M2 19 L3 23 M9 28 L13 29 M22 25 L25 22" stroke="#888" stroke-width="3.2" stroke-linecap="round"/><path d="M5 10 L3 13 M2 19 L3 23 M9 28 L13 29 M22 25 L25 22" stroke="#f4f4f4" stroke-width="1.6" stroke-linecap="round"/></g>
<g transform="translate(72,264.5) scale(1.0469)"><path d="M6.7 1 H11.3 V6.7 H17 V11.3 H11.3 V17 H6.7 V11.3 H1 V6.7 H6.7Z" fill="#9e9e9e" stroke="#777" stroke-width="0.8"/><path d="M3 30 Q5 20 14 18 Q24 15 26 3" fill="none" stroke="#8a8a8a" stroke-width="3.2" stroke-linecap="round"/><path d="M3 30 Q5 20 14 18 Q24 15 26 3" fill="none" stroke="#f4f4f4" stroke-width="1.4000000000000001" stroke-linecap="round"/><path d="M19.5 15.5 L18.5 31.5 M26.5 15.5 L25.5 31.5 M14.0 20.5 H31.0 M14.0 27.0 H31.0" stroke="#858585" stroke-width="3.6"/><path d="M19.5 15.5 L18.5 31.5 M26.5 15.5 L25.5 31.5 M14.0 20.5 H31.0 M14.0 27.0 H31.0" stroke="#e6e6e6" stroke-width="1.3"/></g>
<g transform="translate(119.5,264.5) scale(1.0469)"><rect x="1" y="4" width="18" height="5.5" fill="#9e9e9e" stroke="#777" stroke-width="0.8"/><path d="M3 30 Q5 20 14 18 Q24 15 26 3" fill="none" stroke="#8a8a8a" stroke-width="3.2" stroke-linecap="round"/><path d="M3 30 Q5 20 14 18 Q24 15 26 3" fill="none" stroke="#f4f4f4" stroke-width="1.4000000000000001" stroke-linecap="round"/><path d="M19.5 15.5 L18.5 31.5 M26.5 15.5 L25.5 31.5 M14.0 20.5 H31.0 M14.0 27.0 H31.0" stroke="#858585" stroke-width="3.6"/><path d="M19.5 15.5 L18.5 31.5 M26.5 15.5 L25.5 31.5 M14.0 20.5 H31.0 M14.0 27.0 H31.0" stroke="#e6e6e6" stroke-width="1.3"/></g>
<g transform="translate(168,264.5) scale(1.0469)"><path d="M6.7 1 H11.3 V6.7 H17 V11.3 H11.3 V17 H6.7 V11.3 H1 V6.7 H6.7Z" fill="#9e9e9e" stroke="#777" stroke-width="0.8"/><path d="M3 30 Q5 20 14 18 Q24 15 26 3" fill="none" stroke="#8a8a8a" stroke-width="3.2" stroke-linecap="round"/><path d="M3 30 Q5 20 14 18 Q24 15 26 3" fill="none" stroke="#f4f4f4" stroke-width="1.4000000000000001" stroke-linecap="round"/><path d="M19.5 15.5 L18.5 31.5 M26.5 15.5 L25.5 31.5 M14.0 20.5 H31.0 M14.0 27.0 H31.0" stroke="#858585" stroke-width="3.6"/><path d="M19.5 15.5 L18.5 31.5 M26.5 15.5 L25.5 31.5 M14.0 20.5 H31.0 M14.0 27.0 H31.0" stroke="#e6e6e6" stroke-width="1.3"/><circle cx="27" cy="3.5" r="3.3" fill="#aaa" stroke="#777" stroke-width="0.8"/></g>
<g transform="translate(235,264.5) scale(1.0469)"><path d="M6.7 1 H11.3 V6.7 H17 V11.3 H11.3 V17 H6.7 V11.3 H1 V6.7 H6.7Z" fill="#9e9e9e" stroke="#777" stroke-width="0.8"/><path d="M3 30 Q5 20 14 18 Q24 15 26 3" fill="none" stroke="#8a8a8a" stroke-width="3.2" stroke-linecap="round"/><path d="M3 30 Q5 20 14 18 Q24 15 26 3" fill="none" stroke="#f4f4f4" stroke-width="1.4000000000000001" stroke-linecap="round"/><circle cx="24" cy="18" r="3.8" fill="#aaa" stroke="#777" stroke-width="0.8"/></g>
<g transform="translate(281,264.5) scale(1.0469)"><path d="M1 8 H7 V4 L13 9 L7 14 V10 H1Z M26 8 H20 V4 L14 9 L20 14 V10 H26Z" fill="#9e9e9e" stroke="#777" stroke-width="0.8"/><path d="M3 30 Q5 20 14 18 Q24 15 26 3" fill="none" stroke="#8a8a8a" stroke-width="3.2" stroke-linecap="round"/><path d="M3 30 Q5 20 14 18 Q24 15 26 3" fill="none" stroke="#f4f4f4" stroke-width="1.4000000000000001" stroke-linecap="round"/><circle cx="14" cy="21" r="3.6" fill="#fff" stroke="#777" stroke-width="1"/></g>
<rect x="208" y="276.0" width="13.6" height="1.9" fill="#c4c4c4"/><path d="M208 277.9 H220 L214.2 284.0Z" fill="#858585"/>
<rect x="337.59999999999997" y="269.2" width="1.6" height="1.6" fill="#8a8a8a"/><rect x="342.7" y="269.2" width="1.6" height="1.6" fill="#8a8a8a"/><rect x="337.59999999999997" y="273.55" width="1.6" height="1.6" fill="#8a8a8a"/><rect x="342.7" y="273.55" width="1.6" height="1.6" fill="#8a8a8a"/><rect x="337.59999999999997" y="277.9" width="1.6" height="1.6" fill="#8a8a8a"/><rect x="342.7" y="277.9" width="1.6" height="1.6" fill="#8a8a8a"/><rect x="337.59999999999997" y="282.25" width="1.6" height="1.6" fill="#8a8a8a"/><rect x="342.7" y="282.25" width="1.6" height="1.6" fill="#8a8a8a"/><rect x="337.59999999999997" y="286.59999999999997" width="1.6" height="1.6" fill="#8a8a8a"/><rect x="342.7" y="286.59999999999997" width="1.6" height="1.6" fill="#8a8a8a"/><rect x="337.59999999999997" y="290.95" width="1.6" height="1.6" fill="#8a8a8a"/><rect x="342.7" y="290.95" width="1.6" height="1.6" fill="#8a8a8a"/>
<g transform="translate(353,264.5) scale(1.0469)"><path d="M6 3 V29" fill="none" stroke="#8a8a8a" stroke-width="3.6" stroke-linecap="round"/><path d="M6 3 V29" fill="none" stroke="#f4f4f4" stroke-width="1.8" stroke-linecap="round"/><circle cx="6" cy="3.5" r="3.5" fill="#8a8a8a" stroke="#666" stroke-width="0.8"/><circle cx="6" cy="28.5" r="3.5" fill="#8a8a8a" stroke="#666" stroke-width="0.8"/><path d="M13 4 L19 9 L13 13 M29 4 L23 9 L29 13" fill="none" stroke="#8a8a8a" stroke-width="2.6" stroke-linecap="round"/><path d="M13 4 L19 9 L13 13 M29 4 L23 9 L29 13" fill="none" stroke="#f4f4f4" stroke-width="0.8" stroke-linecap="round"/><path d="M13 29 L27 17 M18 31 L30 21" fill="none" stroke="#8a8a8a" stroke-width="2.6" stroke-linecap="round"/><path d="M13 29 L27 17 M18 31 L30 21" fill="none" stroke="#f4f4f4" stroke-width="0.8" stroke-linecap="round"/></g>
<g transform="translate(401,264.5) scale(1.0469)"><path d="M4 3 V29 M28 3 V29" fill="none" stroke="#8a8a8a" stroke-width="3.6" stroke-linecap="round"/><path d="M4 3 V29 M28 3 V29" fill="none" stroke="#f4f4f4" stroke-width="1.8" stroke-linecap="round"/><circle cx="4" cy="3.5" r="3.5" fill="#a5a5a5" stroke="#777" stroke-width="0.8"/><circle cx="4" cy="28.5" r="3.5" fill="#a5a5a5" stroke="#777" stroke-width="0.8"/><circle cx="28" cy="3.5" r="3.5" fill="#a5a5a5" stroke="#777" stroke-width="0.8"/><circle cx="28" cy="28.5" r="3.5" fill="#a5a5a5" stroke="#777" stroke-width="0.8"/><path d="M9 21 L19 13 M13 23 L23 15" fill="none" stroke="#8a8a8a" stroke-width="2.6" stroke-linecap="round"/><path d="M9 21 L19 13 M13 23 L23 15" fill="none" stroke="#f4f4f4" stroke-width="0.8" stroke-linecap="round"/></g>
<rect x="447.5" y="267" width="2.2" height="29" fill="#9a9a9a"/>
<g transform="translate(461.5,264.5) scale(1.0625)"><path d="M16 4 A13 13 0 1 0 28.3 21.5" fill="none" stroke="#2a5a10" stroke-width="4.8"/><path d="M16 4 A13 13 0 1 0 28.3 21.5" fill="none" stroke="#78c83a" stroke-width="3"/><path d="M16 4 A13 13 0 0 1 28.3 21.5" fill="none" stroke="#333" stroke-width="1.3"/><circle cx="16" cy="4" r="3.6" fill="#d8141b" stroke="#5a0a0a" stroke-width="0.9"/><circle cx="28.3" cy="21.5" r="3.6" fill="#d8141b" stroke="#5a0a0a" stroke-width="0.9"/></g>
<g transform="translate(510,264.5) scale(1.0469)"><path d="M7.1 6.5 L28.7 3.1 L24.9 25 L3.6 28Z" fill="none" stroke="#6e6e6e" stroke-width="3.4" stroke-linecap="round"/><path d="M7.1 6.5 L28.7 3.1 L24.9 25 L3.6 28Z" fill="none" stroke="#bdbdbd" stroke-width="1.5999999999999999" stroke-linecap="round"/><path d="M8 19 L20 9 L25 12 L13 23Z" fill="none" stroke="#8a8a8a" stroke-width="3.2" stroke-linejoin="round"/><path d="M8 19 L20 9 L25 12 L13 23Z" fill="none" stroke="#f6f6f6" stroke-width="1.4" stroke-linejoin="round"/><circle cx="7.1" cy="6.5" r="3.2" fill="#8e8e8e" stroke="#6a6a6a" stroke-width="0.9"/><circle cx="28.7" cy="3.1" r="3.2" fill="#8e8e8e" stroke="#6a6a6a" stroke-width="0.9"/><circle cx="24.9" cy="25" r="3.2" fill="#8e8e8e" stroke="#6a6a6a" stroke-width="0.9"/><circle cx="3.6" cy="28" r="3.2" fill="#8e8e8e" stroke="#6a6a6a" stroke-width="0.9"/></g>
<rect x="551" y="276.0" width="13.6" height="1.9" fill="#c4c4c4"/><path d="M551 277.9 H563 L557.2 284.0Z" fill="#858585"/>
<g transform="translate(578,264.5) scale(1.0469)"><ellipse cx="16" cy="15.8" rx="17" ry="6.3" transform="rotate(-50 16 15.8)" fill="none" stroke="#7a7a7a" stroke-width="1.3"/><ellipse cx="16" cy="15.8" rx="14" ry="4.2" transform="rotate(-50 16 15.8)" fill="none" stroke="#9a9a9a" stroke-width="1"/><path d="M3.8 28.2 L30 2.2 M9 9 L23 22.5" fill="none" stroke="#6e6e6e" stroke-width="3.6" stroke-linecap="round"/><path d="M3.8 28.2 L30 2.2 M9 9 L23 22.5" fill="none" stroke="#a8a8a8" stroke-width="1.8" stroke-linecap="round"/><circle cx="22.8" cy="9" r="3.2" fill="#9a9a9a" stroke="#6e6e6e" stroke-width="0.9"/><circle cx="9.1" cy="22" r="3.2" fill="#9a9a9a" stroke="#6e6e6e" stroke-width="0.9"/></g>
<g transform="translate(627,264.5) scale(1.0469)"><rect x="16.8" y="4.6" width="9" height="8.8" fill="none" stroke="#7e7e7e" stroke-width="2"/><circle cx="25.9" cy="5.9" r="4.6" fill="#f0f0f0" stroke="#7e7e7e" stroke-width="1.6"/><circle cx="25.9" cy="5.9" r="2.4" fill="none" stroke="#8a8a8a" stroke-width="1.2"/><rect x="1.4" y="20.4" width="9" height="8.9" fill="none" stroke="#9a9a9a" stroke-width="2"/><circle cx="10.4" cy="21" r="4.6" fill="#f0f0f0" stroke="#8a8a8a" stroke-width="1.8"/><circle cx="10.4" cy="21" r="2.2" fill="#9a9a9a"/><path d="M13 2.2 Q9 2.2 8.2 6.5" fill="none" stroke="#8a8a8a" stroke-width="1.8"/><path d="M6 5 L8.2 8.8 L10.5 5.4Z" fill="#8a8a8a"/><path d="M27.5 20.5 Q27.5 26 22.5 26.5" fill="none" stroke="#8a8a8a" stroke-width="1.8"/><path d="M23.8 24 L20.5 26.5 L24 28.6Z" fill="#8a8a8a"/></g>
<rect x="681.6" y="269.2" width="1.6" height="1.6" fill="#8a8a8a"/><rect x="686.6999999999999" y="269.2" width="1.6" height="1.6" fill="#8a8a8a"/><rect x="681.6" y="273.55" width="1.6" height="1.6" fill="#8a8a8a"/><rect x="686.6999999999999" y="273.55" width="1.6" height="1.6" fill="#8a8a8a"/><rect x="681.6" y="277.9" width="1.6" height="1.6" fill="#8a8a8a"/><rect x="686.6999999999999" y="277.9" width="1.6" height="1.6" fill="#8a8a8a"/><rect x="681.6" y="282.25" width="1.6" height="1.6" fill="#8a8a8a"/><rect x="686.6999999999999" y="282.25" width="1.6" height="1.6" fill="#8a8a8a"/><rect x="681.6" y="286.59999999999997" width="1.6" height="1.6" fill="#8a8a8a"/><rect x="686.6999999999999" y="286.59999999999997" width="1.6" height="1.6" fill="#8a8a8a"/><rect x="681.6" y="290.95" width="1.6" height="1.6" fill="#8a8a8a"/><rect x="686.6999999999999" y="290.95" width="1.6" height="1.6" fill="#8a8a8a"/>
<g transform="translate(696,264.5) scale(1.0469)"><path d="M5.60 0.50 V2.60 M5.60 29.00 V31.50 M5.60 4.40 V6.80 M5.60 14.70 V17.10 M5.60 24.80 V27.20 M5.60 8.60 V12.90 M5.60 18.90 V23.00 M15.90 0.50 V2.60 M15.90 29.00 V31.50 M15.90 4.40 V6.80 M15.90 14.70 V17.10 M15.90 24.80 V27.20 M15.90 8.60 V12.90 M15.90 18.90 V23.00 M26.00 0.50 V2.60 M26.00 29.00 V31.50 M26.00 4.40 V6.80 M26.00 14.70 V17.10 M26.00 24.80 V27.20 M26.00 8.60 V12.90 M26.00 18.90 V23.00" stroke="#303030" stroke-width="2.1"/><path d="M0.50 5.70 H2.70 M28.80 5.70 H31.50 M4.50 5.70 H6.90 M14.60 5.70 H17.00 M24.60 5.70 H27.00 M8.70 5.70 H12.80 M18.80 5.70 H22.80 M0.50 15.80 H2.70 M28.80 15.80 H31.50 M4.50 15.80 H6.90 M14.60 15.80 H17.00 M24.60 15.80 H27.00 M8.70 15.80 H12.80 M18.80 15.80 H22.80 M0.50 25.80 H2.70 M28.80 25.80 H31.50 M4.50 25.80 H6.90 M14.60 25.80 H17.00 M24.60 25.80 H27.00 M8.70 25.80 H12.80 M18.80 25.80 H22.80" stroke="#303030" stroke-width="2.1"/></g>
<rect x="738" y="276.0" width="13.6" height="1.9" fill="#c4c4c4"/><path d="M738 277.9 H750 L744.2 284.0Z" fill="#858585"/>
<g transform="translate(764,264.5) scale(1.0625)"><path d="M5.5 0.5 V31.5 M0.5 5.7 H31.5" stroke="#5ae06a" stroke-width="1.8" stroke-dasharray="3 2"/><path d="M0.50 5.70 H2.60 M29.00 5.70 H31.50 M4.40 5.70 H6.80 M14.70 5.70 H17.10 M24.80 5.70 H27.20 M8.60 5.70 H12.90 M18.90 5.70 H23.00 M0.50 15.80 H2.60 M29.00 15.80 H31.50 M4.40 15.80 H6.80 M14.70 15.80 H17.10 M24.80 15.80 H27.20 M8.60 15.80 H12.90 M18.90 15.80 H23.00 M0.50 25.80 H2.60 M29.00 25.80 H31.50 M4.40 25.80 H6.80 M14.70 25.80 H17.10 M24.80 25.80 H27.20 M8.60 25.80 H12.90 M18.90 25.80 H23.00" stroke="#303030" stroke-width="2.1"/><path d="M15.90 0.50 V2.70 M15.90 28.80 V31.50 M15.90 4.50 V6.90 M15.90 14.60 V17.00 M15.90 24.60 V27.00 M15.90 8.70 V12.80 M15.90 18.80 V22.80 M26.00 0.50 V2.70 M26.00 28.80 V31.50 M26.00 4.50 V6.90 M26.00 14.60 V17.00 M26.00 24.60 V27.00 M26.00 8.70 V12.80 M26.00 18.80 V22.80" stroke="#303030" stroke-width="2.1"/><path d="M8.5 10 L20 4.5" stroke="#2a5a10" stroke-width="4"/><path d="M8.5 10 L20 4.5" stroke="#78c83a" stroke-width="2.4"/><circle cx="8.5" cy="10" r="3.2" fill="#d8141b" stroke="#5a0a0a" stroke-width="0.9"/><circle cx="20" cy="4.5" r="3.2" fill="#d8141b" stroke="#5a0a0a" stroke-width="0.9"/><path d="M10 12 L25 25 L19.5 25.5 L23 31.5 L20 33 L16.5 27 L12 30.5Z" fill="#d8d8d8" stroke="#888" stroke-width="1"/></g>
<rect x="805" y="276.0" width="13.6" height="1.9" fill="#c4c4c4"/><path d="M805 277.9 H817 L811.2 284.0Z" fill="#858585"/>
<g transform="translate(830,264.5) scale(1.0625)"><rect x="2.3" y="8.6" width="20.6" height="20.9" rx="2.5" fill="none" stroke="#858585" stroke-width="2.4"/><rect x="6.5" y="12.6" width="12.4" height="12.6" fill="none" stroke="#858585" stroke-width="1.8"/><circle cx="21.2" cy="11.3" r="10.1" fill="none" stroke="#f6f6f6" stroke-width="4.4"/><circle cx="21.2" cy="11.3" r="10.1" fill="none" stroke="#858585" stroke-width="2.2"/><circle cx="21.2" cy="11.3" r="6.3" fill="none" stroke="#858585" stroke-width="1.8"/></g>
<rect x="872.5" y="276.0" width="13.6" height="1.9" fill="#c4c4c4"/><path d="M872.5 277.9 H884.5 L878.7 284.0Z" fill="#858585"/>
</svg><div style="position:absolute;left:364px;top:84px;width:223.5px;height:35.5px;border:1px solid #a6a6a6;border-radius:3px;background:linear-gradient(#fbfbfb,#f6f6f6 40%,#efefef)"></div><svg style="position:absolute;left:371px;top:90px" width="24" height="24" viewBox="0 0 24 24"><rect x="1.2" y="8.3" width="14.5" height="14.3" fill="none" stroke="#c0242a" stroke-width="2.3"/><circle cx="14.3" cy="8.5" r="7.2" fill="none" stroke="#c0242a" stroke-width="2.3"/></svg><div style="position:absolute;left:404.00px;top:95.22px;font-family:'Liberation Sans',sans-serif;font-size:16.86px;line-height:1;font-weight:normal;font-style:normal;color:#111;white-space:pre;font-kerning:none;transform:scaleX(0.9469);transform-origin:0 0;">Sketcher</div><svg style="position:absolute;left:563px;top:100px" width="11" height="6"><path d="M0.5 0.5 H10.5 L5.5 5.5Z" fill="#6a6a6a"/></svg>
<div style="position:absolute;left:454px;top:311px;width:9px;height:788px;background:#ebebeb"></div>
<div style="position:absolute;left:0px;top:315px;width:55px;height:33px;border:1px solid #acacac;border-bottom:none;border-radius:3px 3px 0 0;background:linear-gradient(#ececec,#d9d9d9)"></div>
<div style="position:absolute;left:7.50px;top:324.85px;font-family:'Liberation Sans',sans-serif;font-size:17.30px;line-height:1;font-weight:normal;font-style:normal;color:#6b6f76;white-space:pre;font-kerning:none;transform:scaleX(0.8808);transform-origin:0 0;">Model</div>
<div style="position:absolute;left:58px;top:311px;width:102px;height:38px;border:1px solid #acacac;border-bottom:none;border-radius:3px 3px 0 0;background:linear-gradient(#fafafa,#f2f2f2 70%,#f0f0f0)"></div>
<svg style="position:absolute;left:65px;top:317px" width="25" height="25" viewBox="0 0 25 25">
<path d="M1.05 6.1 L6.5 0.9 L21.4 16 L15.7 21.4 Z" fill="#2a5aa0" stroke="#0d1e40" stroke-width="1"/>
<path d="M3.2 4.1 L18.5 19.2" stroke="#6b9ad8" stroke-width="1.8"/>
<path d="M15.7 21.4 L21.4 16 L23 23 Z" fill="#f8f8f8" stroke="#222" stroke-width="0.9"/>
<path d="M19.6 21.2 L21.9 19 L23 23 Z" fill="#000"/>
</svg>
<div style="position:absolute;left:105.00px;top:322.85px;font-family:'Liberation Sans',sans-serif;font-size:17.30px;line-height:1;font-weight:normal;font-style:normal;color:#111;white-space:pre;font-kerning:none;transform:scaleX(0.9274);transform-origin:0 0;">Tasks</div>
<div style="position:absolute;left:185.50px;top:353.57px;font-family:'Liberation Sans',sans-serif;font-size:17.15px;line-height:1;font-weight:normal;font-style:normal;color:#111;white-space:pre;font-kerning:none;transform:scaleX(0.9421);transform-origin:0 0;">Tasks</div>
<div style="position:absolute;left:407px;top:354px;width:11px;height:11px;border:1.6px solid #606060"></div>
<div style="position:absolute;left:407px;top:358px;width:13px;height:1.6px;background:#606060"></div>
<svg style="position:absolute;left:435px;top:353px" width="16" height="16"><path d="M4.5 1.5 H13.5 V10.5 H10.5 M1.5 5.5 H10.5 V14.5 H1.5 Z M4.5 5.5 V1.5" fill="none" stroke="#606060" stroke-width="1.7"/></svg>
<div style="position:absolute;left:433px;top:372px;width:18px;height:727px;border:1px solid #a8a8a8;border-right:1.5px solid #a0a0a0;border-bottom:none;background:linear-gradient(90deg,#fefefe,#f9f9f9 50%,#eeeeee)"></div>
<div style="position:absolute;left:434px;top:392px;width:18px;height:2px;background:#b0b0b0"></div>
<svg style="position:absolute;left:440px;top:380px" width="8" height="5"><path d="M0.5 4.5 L4 1 L7.5 4.5Z" fill="#555"/></svg>
<div style="position:absolute;left:149px;top:398px;width:133px;height:33px;border:1px solid #a9a9a9;border-radius:3px;background:linear-gradient(#fdfdfd,#f1f1f1)"></div>
<div style="position:absolute;left:197.00px;top:408.54px;font-family:'Liberation Sans',sans-serif;font-size:16.72px;line-height:1;font-weight:normal;font-style:normal;color:#111;white-space:pre;font-kerning:none;transform:scaleX(0.9078);transform-origin:0 0;">Close</div>
<div style="position:absolute;left:11px;top:460px;width:408px;height:106px;border-radius:5px;background:#c6dcf2;box-shadow:0 0 0 1.5px #fbfdff"></div>
<div style="position:absolute;left:11px;top:460px;width:408px;height:37px;border-radius:5px 5px 0 0;background:linear-gradient(90deg,#fdfeff 0%,#e8f1fb 45%,#c9ddf3 100%)"></div>
<div style="position:absolute;left:11px;top:497px;width:408px;height:1px;background:#dde9f6"></div>
<div style="position:absolute;left:47.20px;top:471.22px;font-family:'Liberation Sans',sans-serif;font-size:16.86px;line-height:1;font-weight:bold;font-style:normal;color:#000;white-space:pre;font-kerning:none;transform:scaleX(0.9987);transform-origin:0 0;">Solver messages</div>
<svg style="position:absolute;left:20px;top:467px" width="24" height="24" viewBox="0 0 24 24"><rect x="1.5" y="9" width="14" height="13" fill="none" stroke="#c0282d" stroke-width="2.2"/><circle cx="14.5" cy="8.5" r="7" fill="none" stroke="#c0282d" stroke-width="2.2"/></svg>
<svg style="position:absolute;left:390px;top:466px" width="26" height="26">
<circle cx="13" cy="13" r="11.5" fill="none" stroke="#a7aeb6" stroke-width="2"/>
<path d="M8 12 L13 7.5 L18 12 M8 17.5 L13 13 L18 17.5" fill="none" stroke="#7d848c" stroke-width="1.8"/></svg>
<div style="position:absolute;left:11px;top:580px;width:408px;height:407px;border-radius:5px;background:#c6dcf2;box-shadow:0 0 0 1.5px #fbfdff"></div>
<div style="position:absolute;left:11px;top:580px;width:408px;height:37px;border-radius:5px 5px 0 0;background:linear-gradient(90deg,#fdfeff 0%,#e8f1fb 45%,#c9ddf3 100%)"></div>
<div style="position:absolute;left:11px;top:617px;width:408px;height:1px;background:#dde9f6"></div>
<div style="position:absolute;left:47.50px;top:592.00px;font-family:'Liberation Sans',sans-serif;font-size:15.70px;line-height:1;font-weight:bold;font-style:normal;color:#000;white-space:pre;font-kerning:none;transform:scaleX(1.0812);transform-origin:0 0;">Constraints</div>
<svg style="position:absolute;left:20px;top:587px" width="24" height="24" viewBox="0 0 24 24">
<path d="M3 20 L20 3" stroke="#555" stroke-width="5"/><path d="M3 20 L20 3" stroke="#eee" stroke-width="2"/>
<circle cx="3" cy="20.5" r="2.5" fill="#c82a2a"/><circle cx="20.5" cy="3" r="2.5" fill="#c82a2a"/>
<path d="M1 14 L12 3 M1 14 L1.5 8.5 M1 14 L6.5 13.5 M12 3 L6.5 3.5 M12 3 L11.5 8.5" stroke="#c82a2a" stroke-width="2" fill="none"/>
<path d="M12 22 L23 22 M13 22 L19 15.5 M18 17 A6 6 0 0 1 20.5 22" stroke="#c82a2a" stroke-width="2" fill="none"/>
</svg>
<svg style="position:absolute;left:390px;top:586px" width="26" height="26">
<circle cx="13" cy="13" r="11.5" fill="none" stroke="#a7aeb6" stroke-width="2"/>
<path d="M8 12 L13 7.5 L18 12 M8 17.5 L13 13 L18 17.5" fill="none" stroke="#7d848c" stroke-width="1.8"/></svg>
<div style="position:absolute;left:11px;top:1002px;width:408px;height:118px;border-radius:5px;background:#c6dcf2;box-shadow:0 0 0 1.5px #fbfdff"></div>
<div style="position:absolute;left:11px;top:1002px;width:408px;height:36px;border-radius:5px 5px 0 0;background:linear-gradient(90deg,#fdfeff 0%,#e8f1fb 45%,#c9ddf3 100%)"></div>
<div style="position:absolute;left:11px;top:1038px;width:408px;height:1px;background:#dde9f6"></div>
<div style="position:absolute;left:48.00px;top:1012.97px;font-family:'Liberation Sans',sans-serif;font-size:17.15px;line-height:1;font-weight:bold;font-style:normal;color:#000;white-space:pre;font-kerning:none;transform:scaleX(0.9888);transform-origin:0 0;">Elements</div>
<svg style="position:absolute;left:20px;top:1008px" width="24" height="24" viewBox="0 0 24 24"><path d="M3.5 21 L21 3.5" stroke="#666" stroke-width="3.5"/><path d="M3.5 21 L21 3.5" stroke="#e0e0e0" stroke-width="1.4"/><circle cx="3.5" cy="21" r="2.6" fill="#c82a2a" stroke="#7a1010" stroke-width="0.6"/><circle cx="21" cy="3.5" r="2.6" fill="#c82a2a" stroke="#7a1010" stroke-width="0.6"/></svg>
<svg style="position:absolute;left:390px;top:1008px" width="26" height="26">
<circle cx="13" cy="13" r="11.5" fill="none" stroke="#a7aeb6" stroke-width="2"/>
<path d="M8 12 L13 7.5 L18 12 M8 17.5 L13 13 L18 17.5" fill="none" stroke="#7d848c" stroke-width="1.8"/></svg>
<div style="position:absolute;left:32.20px;top:523.75px;font-family:'Liberation Sans',sans-serif;font-size:17.30px;line-height:1;font-weight:normal;font-style:normal;color:#111;white-space:pre;font-kerning:none;transform:scaleX(0.9368);transform-origin:0 0;">Under-constrained:</div>
<div style="position:absolute;left:186.60px;top:523.76px;font-family:'Liberation Sans',sans-serif;font-size:17.88px;line-height:1;font-weight:normal;font-style:normal;color:#1d5ea8;white-space:pre;font-kerning:none;transform:scaleX(0.8975);transform-origin:0 0;text-decoration:underline;text-underline-offset:2.5px;text-decoration-thickness:1px">2 DoF(s)</div>
<div style="position:absolute;left:337px;top:517px;width:60px;height:27px;border:1px solid #a9a9a9;border-radius:3px;background:linear-gradient(#fdfdfd,#f1f1f1)"></div><div style="position:absolute;left:369px;top:518px;width:1px;height:27px;background:#b8b8b8"></div><svg style="position:absolute;left:340px;top:518px" width="26" height="26" viewBox="0 0 32 32">
<path d="M5 14 A11 11 0 0 1 24 7 L27 4 L28 14 L18 13 L21 10 A7 7 0 0 0 10 14 Z" fill="#4a86c8" stroke="#1f4f8a" stroke-width="1.2"/>
<path d="M27 18 A11 11 0 0 1 8 25 L5 28 L4 18 L14 19 L11 22 A7 7 0 0 0 22 18 Z" fill="#4a86c8" stroke="#1f4f8a" stroke-width="1.2"/>
</svg><svg style="position:absolute;left:377.0px;top:527.5px" width="14" height="8"><path d="M0.5 0.5 H13.5 V1.8 H0.5Z M2 2.5 H12 L7 7.5Z" fill="#6e6e6e"/></svg>
<div style="position:absolute;left:35px;top:642px;width:17px;height:17px;border:2px solid #333;background:#fff"></div>
<div style="position:absolute;left:79px;top:636px;width:203px;height:32px;border:1px solid #a9a9a9;border-radius:3px;background:linear-gradient(#fdfdfd,#f1f1f1)"></div><div style="position:absolute;left:253px;top:637px;width:1px;height:32px;background:#b8b8b8"></div><div style="position:absolute;left:145.10px;top:646.27px;font-family:'Liberation Sans',sans-serif;font-size:16.57px;line-height:1;font-weight:normal;font-style:normal;color:#5b6068;white-space:pre;font-kerning:none;transform:scaleX(0.9445);transform-origin:0 0;">Filters</div><svg style="position:absolute;left:261.5px;top:649.0px" width="14" height="8"><path d="M0.5 0.5 H13.5 V1.8 H0.5Z M2 2.5 H12 L7 7.5Z" fill="#6e6e6e"/></svg>
<div style="position:absolute;left:293px;top:636px;width:32px;height:32px;border:1px solid #a9a9a9;border-radius:3px;background:linear-gradient(#fdfdfd,#f1f1f1)"></div>
<svg style="position:absolute;left:298px;top:644px" width="24" height="18" viewBox="0 0 24 18"><path d="M1.2 8.7 Q12 -3 22.8 8.7 Q12 20.4 1.2 8.7Z" fill="#f4f4f4" stroke="#333" stroke-width="1.2"/><circle cx="12" cy="8.7" r="5.9" fill="#4a7cc0" stroke="#2a5590" stroke-width="0.8"/><circle cx="12" cy="8.7" r="4.2" fill="#3a6ab0"/><circle cx="12" cy="8.7" r="2.3" fill="#0b1020"/></svg>
<div style="position:absolute;left:337px;top:636px;width:60px;height:32px;border:1px solid #a9a9a9;border-radius:3px;background:linear-gradient(#fdfdfd,#f1f1f1)"></div><div style="position:absolute;left:369px;top:637px;width:1px;height:32px;background:#b8b8b8"></div><svg style="position:absolute;left:341px;top:641px" width="24" height="24" viewBox="0 0 24 24">
<path d="M6.5 6.5 L20.2 20" stroke="#9a9a9a" stroke-width="3.6" stroke-linecap="round"/>
<path d="M6.5 6.5 L20.2 20" stroke="#e2e2e2" stroke-width="2.2" stroke-linecap="round"/>
<path d="M3.2 1.8 A4.2 4.2 0 1 0 8.8 7.2 L6.8 6.2 L5 4.4 Z" fill="#e8e8e8" stroke="#a0a0a0" stroke-width="0.9"/>
<path d="M12.5 12.5 L21.3 3.8" stroke="#8c95a8" stroke-width="2.6" stroke-linecap="round"/>
<path d="M12.5 12.5 L21.3 3.8" stroke="#d8dde8" stroke-width="1.2" stroke-linecap="round"/>
<path d="M3 21 L12.3 12.8" stroke="#1d4a8c" stroke-width="4.6" stroke-linecap="round"/>
<path d="M3 21 L12.3 12.8" stroke="#4a82c8" stroke-width="2.6" stroke-linecap="round"/>
</svg><svg style="position:absolute;left:377.0px;top:649.0px" width="14" height="8"><path d="M0.5 0.5 H13.5 V1.8 H0.5Z M2 2.5 H12 L7 7.5Z" fill="#6e6e6e"/></svg>
<div style="position:absolute;left:32px;top:680px;width:347px;height:288px;background:#f0f0f0;overflow:hidden"><div style="position:absolute;left:4.5px;top:8.5px;width:17px;height:17px;border:2px solid #333;background:#fff"></div><svg style="position:absolute;left:4.5px;top:8.5px" width="21" height="21"><path d="M5.2 10.2 L9 15.2 L14.8 4.8" stroke="#111" stroke-width="2.5" fill="none"/></svg><div style="position:absolute;left:35px;top:1px"><svg width="36" height="36"><path d="M2.5 2.5 L10 9.5 M33.5 2.5 L26 9.5 M2.5 33 L10 26 M33.5 33 L26 26" fill="none" stroke="#5a0a0c" stroke-width="4.6" stroke-linecap="round" stroke-linejoin="round"/><path d="M2.5 2.5 L10 9.5 M33.5 2.5 L26 9.5 M2.5 33 L10 26 M33.5 33 L26 26" fill="none" stroke="#c8161c" stroke-width="3.0" stroke-linecap="round" stroke-linejoin="round"/><circle cx="17.8" cy="17.7" r="4.9" fill="#d8141b" stroke="#5a0a0c" stroke-width="0.9"/></svg></div><div style="position:absolute;left:80.40px;top:11.67px;font-family:'Liberation Sans',sans-serif;font-size:17.15px;line-height:1;font-weight:normal;font-style:normal;color:#111;white-space:pre;font-kerning:none;transform:scaleX(1.0079);transform-origin:0 0;">Constraint1</div><div style="position:absolute;left:4.5px;top:47.5px;width:17px;height:17px;border:2px solid #333;background:#fff"></div><svg style="position:absolute;left:4.5px;top:47.5px" width="21" height="21"><path d="M5.2 10.2 L9 15.2 L14.8 4.8" stroke="#111" stroke-width="2.5" fill="none"/></svg><div style="position:absolute;left:35px;top:40px"><svg width="36" height="36"><path d="M2.5 2.5 L10 9.5 M33.5 2.5 L26 9.5 M2.5 33 L10 26 M33.5 33 L26 26" fill="none" stroke="#5a0a0c" stroke-width="4.6" stroke-linecap="round" stroke-linejoin="round"/><path d="M2.5 2.5 L10 9.5 M33.5 2.5 L26 9.5 M2.5 33 L10 26 M33.5 33 L26 26" fill="none" stroke="#c8161c" stroke-width="3.0" stroke-linecap="round" stroke-linejoin="round"/><circle cx="17.8" cy="17.7" r="4.9" fill="#d8141b" stroke="#5a0a0c" stroke-width="0.9"/></svg></div><div style="position:absolute;left:80.40px;top:50.67px;font-family:'Liberation Sans',sans-serif;font-size:17.15px;line-height:1;font-weight:normal;font-style:normal;color:#111;white-space:pre;font-kerning:none;transform:scaleX(1.0079);transform-origin:0 0;">Constraint2</div><div style="position:absolute;left:4.5px;top:86.5px;width:17px;height:17px;border:2px solid #333;background:#fff"></div><svg style="position:absolute;left:4.5px;top:86.5px" width="21" height="21"><path d="M5.2 10.2 L9 15.2 L14.8 4.8" stroke="#111" stroke-width="2.5" fill="none"/></svg><div style="position:absolute;left:35px;top:79px"><svg width="36" height="36"><rect x="16.2" y="5" width="4" height="25.5" rx="1" fill="#c8161c" stroke="#5a0a0c" stroke-width="0.9"/></svg></div><div style="position:absolute;left:80.40px;top:89.67px;font-family:'Liberation Sans',sans-serif;font-size:17.15px;line-height:1;font-weight:normal;font-style:normal;color:#111;white-space:pre;font-kerning:none;transform:scaleX(1.0079);transform-origin:0 0;">Constraint3</div><div style="position:absolute;left:4.5px;top:125.5px;width:17px;height:17px;border:2px solid #333;background:#fff"></div><svg style="position:absolute;left:4.5px;top:125.5px" width="21" height="21"><path d="M5.2 10.2 L9 15.2 L14.8 4.8" stroke="#111" stroke-width="2.5" fill="none"/></svg><div style="position:absolute;left:35px;top:118px"><svg width="36" height="36"><rect x="16.2" y="5" width="4" height="25.5" rx="1" fill="#c8161c" stroke="#5a0a0c" stroke-width="0.9"/></svg></div><div style="position:absolute;left:80.40px;top:128.67px;font-family:'Liberation Sans',sans-serif;font-size:17.15px;line-height:1;font-weight:normal;font-style:normal;color:#111;white-space:pre;font-kerning:none;transform:scaleX(1.0079);transform-origin:0 0;">Constraint4</div><div style="position:absolute;left:4.5px;top:164.5px;width:17px;height:17px;border:2px solid #333;background:#fff"></div><svg style="position:absolute;left:4.5px;top:164.5px" width="21" height="21"><path d="M5.2 10.2 L9 15.2 L14.8 4.8" stroke="#111" stroke-width="2.5" fill="none"/></svg><div style="position:absolute;left:35px;top:157px"><svg width="36" height="36"><rect x="3.5" y="15.7" width="28.5" height="4" rx="1" fill="#c8161c" stroke="#5a0a0c" stroke-width="0.9"/></svg></div><div style="position:absolute;left:80.40px;top:167.67px;font-family:'Liberation Sans',sans-serif;font-size:17.15px;line-height:1;font-weight:normal;font-style:normal;color:#111;white-space:pre;font-kerning:none;transform:scaleX(1.0079);transform-origin:0 0;">Constraint5</div><div style="position:absolute;left:4.5px;top:203.5px;width:17px;height:17px;border:2px solid #333;background:#fff"></div><svg style="position:absolute;left:4.5px;top:203.5px" width="21" height="21"><path d="M5.2 10.2 L9 15.2 L14.8 4.8" stroke="#111" stroke-width="2.5" fill="none"/></svg><div style="position:absolute;left:35px;top:196px"><svg width="36" height="36"><rect x="3.5" y="15.7" width="28.5" height="4" rx="1" fill="#c8161c" stroke="#5a0a0c" stroke-width="0.9"/></svg></div><div style="position:absolute;left:80.40px;top:206.67px;font-family:'Liberation Sans',sans-serif;font-size:17.15px;line-height:1;font-weight:normal;font-style:normal;color:#111;white-space:pre;font-kerning:none;transform:scaleX(1.0079);transform-origin:0 0;">Constraint6</div><div style="position:absolute;left:4.5px;top:242.5px;width:17px;height:17px;border:2px solid #333;background:#fff"></div><svg style="position:absolute;left:4.5px;top:242.5px" width="21" height="21"><path d="M5.2 10.2 L9 15.2 L14.8 4.8" stroke="#111" stroke-width="2.5" fill="none"/></svg><div style="position:absolute;left:35px;top:235px"><svg width="36" height="36"><path d="M4.3 8.5 L15.2 17.6 L4.3 26.3 M31.6 8.5 L21 17.6 L31.6 26.3" fill="none" stroke="#5a0a0c" stroke-width="4.4" stroke-linecap="round" stroke-linejoin="round"/><path d="M4.3 8.5 L15.2 17.6 L4.3 26.3 M31.6 8.5 L21 17.6 L31.6 26.3" fill="none" stroke="#c8161c" stroke-width="2.9" stroke-linecap="round" stroke-linejoin="round"/></svg></div><div style="position:absolute;left:80.40px;top:245.67px;font-family:'Liberation Sans',sans-serif;font-size:17.15px;line-height:1;font-weight:normal;font-style:normal;color:#111;white-space:pre;font-kerning:none;transform:scaleX(1.0079);transform-origin:0 0;">Constraint7</div><div style="position:absolute;left:4.5px;top:281.5px;width:17px;height:17px;border:2px solid #333;background:#fff"></div><svg style="position:absolute;left:4.5px;top:281.5px" width="21" height="21"><path d="M5.2 10.2 L9 15.2 L14.8 4.8" stroke="#111" stroke-width="2.5" fill="none"/></svg><div style="position:absolute;left:35px;top:274px"><svg width="36" height="36"><path d="M12 8 Q21 2 33.5 5.5" fill="none" stroke="#5a0a0c" stroke-width="4.4" stroke-linecap="round" stroke-linejoin="round"/><path d="M12 8 Q21 2 33.5 5.5" fill="none" stroke="#c8161c" stroke-width="2.9" stroke-linecap="round" stroke-linejoin="round"/><circle cx="10" cy="10" r="5" fill="#d8141b" stroke="#5a0a0c" stroke-width="0.9"/></svg></div><div style="position:absolute;left:80.40px;top:284.67px;font-family:'Liberation Sans',sans-serif;font-size:17.15px;line-height:1;font-weight:normal;font-style:normal;color:#111;white-space:pre;font-kerning:none;transform:scaleX(1.0079);transform-origin:0 0;">Constraint8</div></div>
<div style="position:absolute;left:379px;top:681px;width:19px;height:286px;border:1px solid #cfcfcf;background:#e2e2e2;box-sizing:border-box"></div>
<div style="position:absolute;left:380px;top:682px;width:18px;height:20px;background:linear-gradient(#fbfbfb,#eeeeee);border-bottom:1px solid #c0c0c0"></div>
<svg style="position:absolute;left:386px;top:689px" width="7" height="4"><path d="M0 4 L3.5 0.5 L7 4Z" fill="#555"/></svg>
<div style="position:absolute;left:380px;top:702px;width:18px;height:40px;background:linear-gradient(90deg,#fafafa,#ffffff,#f5f5f5);border-bottom:1px solid #c8c8c8"></div>
<div style="position:absolute;left:380px;top:946px;width:18px;height:21px;background:linear-gradient(#fbfbfb,#eeeeee);border-top:1px solid #c0c0c0"></div>
<svg style="position:absolute;left:386px;top:955px" width="7" height="4"><path d="M0 0 L3.5 3.5 L7 0Z" fill="#555"/></svg>
<div style="position:absolute;left:35px;top:1063px;width:17px;height:17px;border:2px solid #333;background:#fff"></div><svg style="position:absolute;left:35px;top:1063px" width="21" height="21"><path d="M5.2 10.2 L9 15.2 L14.8 4.8" stroke="#111" stroke-width="2.5" fill="none"/></svg>
<div style="position:absolute;left:79px;top:1058px;width:246px;height:32px;border:1px solid #a9a9a9;border-radius:3px;background:linear-gradient(#fdfdfd,#f1f1f1)"></div><div style="position:absolute;left:297px;top:1059px;width:1px;height:32px;background:#b8b8b8"></div><div style="position:absolute;left:166.30px;top:1067.23px;font-family:'Liberation Sans',sans-serif;font-size:17.44px;line-height:1;font-weight:normal;font-style:normal;color:#111;white-space:pre;font-kerning:none;transform:scaleX(0.9205);transform-origin:0 0;">Filters</div><svg style="position:absolute;left:305.0px;top:1071.0px" width="14" height="8"><path d="M0.5 0.5 H13.5 V1.8 H0.5Z M2 2.5 H12 L7 7.5Z" fill="#6e6e6e"/></svg>
<div style="position:absolute;left:337px;top:1058px;width:60px;height:32px;border:1px solid #a9a9a9;border-radius:3px;background:linear-gradient(#fdfdfd,#f1f1f1)"></div><div style="position:absolute;left:369px;top:1059px;width:1px;height:32px;background:#b8b8b8"></div><svg style="position:absolute;left:341px;top:1063px" width="24" height="24" viewBox="0 0 24 24">
<path d="M6.5 6.5 L20.2 20" stroke="#9a9a9a" stroke-width="3.6" stroke-linecap="round"/>
<path d="M6.5 6.5 L20.2 20" stroke="#e2e2e2" stroke-width="2.2" stroke-linecap="round"/>
<path d="M3.2 1.8 A4.2 4.2 0 1 0 8.8 7.2 L6.8 6.2 L5 4.4 Z" fill="#e8e8e8" stroke="#a0a0a0" stroke-width="0.9"/>
<path d="M12.5 12.5 L21.3 3.8" stroke="#8c95a8" stroke-width="2.6" stroke-linecap="round"/>
<path d="M12.5 12.5 L21.3 3.8" stroke="#d8dde8" stroke-width="1.2" stroke-linecap="round"/>
<path d="M3 21 L12.3 12.8" stroke="#1d4a8c" stroke-width="4.6" stroke-linecap="round"/>
<path d="M3 21 L12.3 12.8" stroke="#4a82c8" stroke-width="2.6" stroke-linecap="round"/>
</svg><svg style="position:absolute;left:377.0px;top:1071.0px" width="14" height="8"><path d="M0.5 0.5 H13.5 V1.8 H0.5Z M2 2.5 H12 L7 7.5Z" fill="#6e6e6e"/></svg>
<div style="position:absolute;left:463px;top:311px;width:1346px;height:788px;background:#fff"></div>
<svg style="position:absolute;left:0;top:0" width="1809" height="1099" viewBox="0 0 1809 1099">
<defs><clipPath id="vc"><rect x="463" y="311" width="1346" height="788"/></clipPath></defs>
<g clip-path="url(#vc)">
<rect x="1136" y="311" width="2" height="788" fill="#b5f5b5"/>
<rect x="742.6" y="608.2" width="788.6" height="437.3" rx="44" ry="44" fill="#aeb4bc" stroke="#121314" stroke-width="2.2"/>
<rect x="1136" y="609.5" width="2" height="435" fill="#8edc98"/>
<rect x="463" y="826" width="1346" height="2" fill="#cc9999"/>
<rect x="743.7" y="826" width="786.5" height="2" fill="#c07a7a"/>
<line x1="742.6" y1="652" x2="742.6" y2="747" stroke="#111" stroke-width="2.4"/>
<line x1="742.6" y1="652" x2="742.6" y2="747" stroke="#a040c4" stroke-width="2.2" stroke-dasharray="3.2 4.3"/>
<line x1="742.6" y1="907" x2="742.6" y2="1002.5" stroke="#111" stroke-width="2.4"/>
<line x1="742.6" y1="907" x2="742.6" y2="1002.5" stroke="#a040c4" stroke-width="2.2" stroke-dasharray="3.2 4.3"/>
<line x1="1531.2" y1="881" x2="1531.2" y2="1002.5" stroke="#111" stroke-width="2.4"/>
<line x1="1531.2" y1="881" x2="1531.2" y2="1002.5" stroke="#a040c4" stroke-width="2.2" stroke-dasharray="3.2 4.3"/>
<path d="M742.6 747.3 H600.5 A26.9 26.2 0 0 0 573.6 773.5 V880.5 A26.9 26 0 0 0 600.5 906.5 H742.6" fill="none" stroke="#3a3e44" stroke-width="1.9"/>
<line x1="742.6" y1="747.3" x2="742.6" y2="906.5" stroke="#3a3e44" stroke-width="1.9"/>
<line x1="1531.2" y1="652" x2="1531.2" y2="772" stroke="#b03a3a" stroke-width="2"/>
<path d="M1531.2 772 H1614.6 A26 26.5 0 0 1 1640.5 798.5 V855.6 A26 25.6 0 0 1 1614.6 881.2 H1531.2 Z" fill="none" stroke="#3e9b4a" stroke-width="2.2"/>
<line x1="1531" y1="772" x2="1754" y2="772" stroke="#d9504f" stroke-width="1.3" opacity="0.85"/>
<line x1="1531" y1="881" x2="1754" y2="881" stroke="#d9504f" stroke-width="1.3" opacity="0.85"/>
<line x1="1531.2" y1="772" x2="1614.6" y2="772" stroke="#7d5a3a" stroke-width="2"/>
<line x1="1531.2" y1="881.2" x2="1614.6" y2="881.2" stroke="#7d5a3a" stroke-width="2"/>
<line x1="1640.5" y1="659" x2="1640.5" y2="772" stroke="#d9504f" stroke-width="1.3" opacity="0.85"/>
<line x1="1532" y1="680" x2="1560" y2="680" stroke="#d9504f" stroke-width="1.5"/>
<path d="M1532 680 L1543 675.5 L1543 684.5Z" fill="#d9504f"/>
<path d="M1640 680 L1629 675.5 L1629 684.5Z" fill="#d9504f"/>
<text x="1567" y="686.6" font-family="Liberation Sans" font-size="16.8" fill="#ac5e5c" textLength="53.5" lengthAdjust="spacingAndGlyphs">0.625 "</text>
<text transform="translate(1739.8,724) rotate(-90)" font-family="Liberation Sans" font-size="16.8" fill="#ac5e5c" textLength="53.5" lengthAdjust="spacingAndGlyphs">0.625 "</text>
<line x1="1733.7" y1="732" x2="1733.7" y2="771" stroke="#d9504f" stroke-width="1.5"/>
<path d="M1733.7 772 L1729.2 760 L1738.2 760Z" fill="#d9504f"/>
<line x1="1733.7" y1="882" x2="1733.7" y2="909" stroke="#d9504f" stroke-width="1.5"/>
<path d="M1733.7 881.5 L1729.2 893 L1738.2 893Z" fill="#d9504f"/>
<line x1="1615" y1="855.6" x2="1663" y2="904" stroke="#d9504f" stroke-width="1.4"/>
<path d="M1636 876 L1624 870 L1630 864Z" fill="#d9504f"/>
<text transform="translate(1664,912) rotate(45)" font-family="Liberation Sans" font-size="17" fill="#b05a58">R0.15 "</text>
<text x="1622" y="885.5" font-family="Liberation Sans" font-weight="bold" font-size="14" fill="#b23a3a" textLength="80" lengthAdjust="spacingAndGlyphs">=37, 36, 36</text>
<text x="526.5" y="714" font-family="Liberation Sans" font-weight="bold" font-size="14" fill="#b23a3a" textLength="54" lengthAdjust="spacingAndGlyphs">=38, 37</text>
<text x="540" y="917.5" font-family="Liberation Sans" font-weight="bold" font-size="14" fill="#b23a3a" textLength="28.5" lengthAdjust="spacingAndGlyphs">=38</text>
<path d="M527 733 Q525 723 536 722" fill="none" stroke="#b52a2a" stroke-width="2.3"/>
<path d="M526 737 Q533 738 539 745 M531 741 L529 746" fill="none" stroke="#b52a2a" stroke-width="2.3"/>
<path d="M540 936 Q538 926 549 925" fill="none" stroke="#b52a2a" stroke-width="2.3"/>
<path d="M539 941 Q546 942 552 949 M544 945 L542 950" fill="none" stroke="#b52a2a" stroke-width="2.3"/>
<line x1="664" y1="773" x2="677" y2="773" stroke="#b52a2a" stroke-width="2.3"/>
<line x1="664" y1="881.5" x2="677" y2="881.5" stroke="#b52a2a" stroke-width="2.3"/>
<path d="M656 807 Q654 797 665 796" fill="none" stroke="#b52a2a" stroke-width="2.3"/>
<line x1="599" y1="821.5" x2="599" y2="832.5" stroke="#b52a2a" stroke-width="2.3"/>
<line x1="715.7" y1="821.5" x2="715.7" y2="832.5" stroke="#b52a2a" stroke-width="2.3"/>
<path d="M653.4 823.7 L663.4 831.7 M663.4 823.7 L653.4 831.7" stroke="#b52a2a" stroke-width="2"/>
<path d="M574 747.5 L592 764 M582.4 761.1 L592 764 L588.3 754.7" fill="none" stroke="#d84444" stroke-width="1.3"/>
<path d="M742 906 L724 889 M733.5 892.0 L724 889 L727.6 898.3" fill="none" stroke="#d84444" stroke-width="1.3"/>
<path d="M765 914 Q763 904 774 903" fill="none" stroke="#b52a2a" stroke-width="2.3"/>
<line x1="1566" y1="797" x2="1577" y2="797" stroke="#b52a2a" stroke-width="2.3"/>
<path d="M1582 810 Q1580 800 1591 799" fill="none" stroke="#b52a2a" stroke-width="2.3"/>
<line x1="1557" y1="821.5" x2="1557" y2="832.5" stroke="#b52a2a" stroke-width="2.3"/>
<path d="M1581.6 823.5 L1591.6 831.5 M1591.6 823.5 L1581.6 831.5" stroke="#b52a2a" stroke-width="2"/>
<line x1="1566" y1="857" x2="1578" y2="857" stroke="#b52a2a" stroke-width="2.3"/>
<path d="M1531.5 881 L1550 864 M1546.3 873.3 L1550 864 L1540.4 866.9" fill="none" stroke="#d84444" stroke-width="1.3"/>
<path d="M1502 889 Q1500 879 1511 878" fill="none" stroke="#b52a2a" stroke-width="2.3"/>
<path d="M1624 905 Q1622 895 1633 894" fill="none" stroke="#b52a2a" stroke-width="2.3"/>
<path d="M1621 909 Q1628 910 1634 917 M1626 913 L1624 918" fill="none" stroke="#b52a2a" stroke-width="2.3"/>
<line x1="1628" y1="924.5" x2="1628" y2="933.5" stroke="#b52a2a" stroke-width="2.3"/>
<path d="M1640 772 L1626 787 M1629.0 777.4 L1626 787 L1635.3 783.4" fill="none" stroke="#d84444" stroke-width="1.3"/>
<circle cx="600.5" cy="747.3" r="3.6" fill="#e0302c"/>
<circle cx="573.6" cy="773.5" r="3.6" fill="#e0302c"/>
<circle cx="573.6" cy="880.5" r="3.6" fill="#e0302c"/>
<circle cx="600.5" cy="906.5" r="3.6" fill="#e0302c"/>
<circle cx="742.6" cy="747.3" r="3.6" fill="#e0302c"/>
<circle cx="742.6" cy="906.5" r="3.6" fill="#e0302c"/>
<circle cx="573.6" cy="747.3" r="3.5" fill="#3a5ad0"/>
<circle cx="600.5" cy="773.5" r="3.5" fill="#3a5ad0"/>
<circle cx="600.5" cy="880.5" r="3.5" fill="#3a5ad0"/>
<circle cx="573.6" cy="906.5" r="3.5" fill="#3a5ad0"/>
<circle cx="658.4" cy="827.7" r="3.5" fill="#3a5ad0"/>
<circle cx="1137.5" cy="827.2" r="3.5" fill="#3a5ad0"/>
<circle cx="742.6" cy="652.3" r="3.6" fill="#a844cc"/>
<circle cx="742.6" cy="1002.5" r="3.6" fill="#a844cc"/>
<circle cx="1531.2" cy="652.3" r="3.6" fill="#a844cc"/>
<circle cx="1531.2" cy="1002.5" r="3.6" fill="#a844cc"/>
<circle cx="1531.2" cy="772" r="3.3" fill="#3a9048"/>
<circle cx="1614.6" cy="772" r="3.3" fill="#3a9048"/>
<circle cx="1640.5" cy="798.5" r="3.3" fill="#3a9048"/>
<circle cx="1640.5" cy="855.6" r="3.3" fill="#3a9048"/>
<circle cx="1614.6" cy="881.2" r="3.3" fill="#3a9048"/>
<circle cx="1531.2" cy="881.2" r="3.3" fill="#3a9048"/>
<circle cx="1640.5" cy="772" r="3.3" fill="#90a8f4"/>
<circle cx="1614.6" cy="798.5" r="3.3" fill="#90a8f4"/>
<circle cx="1614.6" cy="855.6" r="3.3" fill="#90a8f4"/>
<circle cx="1586.6" cy="827.5" r="3.3" fill="#90a8f4"/>
<circle cx="1640.5" cy="881" r="3.3" fill="#90a8f4"/>
</g></svg>
<svg style="position:absolute;left:1660px;top:310px" width="149" height="150" viewBox="0 0 149 150">
<g fill="#e4f1fb" stroke="#5a6068" stroke-width="1">
<path d="M79 8.2 L91 21 L67 21Z"/>
<path d="M67 126 L91 126 L79 139.5Z"/>
<path d="M13 74 L26.7 62.5 L26.7 85.5Z"/>
<path d="M131.7 62.5 L145 74 L131.7 85.5Z"/>
<circle cx="136.5" cy="16.5" r="6.7"/>
<path d="M61.5 15.5 Q46 20 36 28.5 L32 27 L30 43 L45 39 L41.5 36 Q50 29 62.5 24Z"/>
<path d="M96.5 15.5 Q112 20 122 28.5 L126 27 L128 43 L113 39 L116.5 36 Q108 29 95.5 24Z"/>
<path d="M55.3 42.3 L103.0 42.3 L110.8 50.1 L110.8 97.5 L103.0 105.3 L55.3 105.3 L47.5 97.5 L47.5 50.1Z"/>
<path d="M63.2 49.8 L95.1 49.8 L102.6 57.3 L102.6 90.0 L95.1 97.5 L63.2 97.5 L55.7 90.0 L55.7 57.3Z"/>
<path d="M62.8 42.3 L62.8 49.8 M95.5 42.3 L95.5 49.8 M62.8 97.5 L62.8 105.3 M95.5 97.5 L95.5 105.3 M47.5 57.3 L55.7 57.3 M47.5 90.0 L55.7 90.0 M102.6 57.3 L110.8 57.3 M102.6 90.0 L110.8 90.0" fill="none"/>
</g>
<text x="79" y="78.2" text-anchor="middle" font-family="Liberation Sans" font-size="11.8" fill="#646a72" textLength="41.5" lengthAdjust="spacingAndGlyphs">FRONT</text>
<line x1="44.2" y1="58" x2="44.2" y2="108.5" stroke="#5a5af0" stroke-width="1.5"/>
<line x1="45.5" y1="108.6" x2="95.5" y2="108.6" stroke="#f07a7a" stroke-width="1.5"/>
<g fill="#e4f1fb" stroke="#5a6068" stroke-width="1"><path d="M114 115 L124 111 L134 115 L134 126 L124 130 L114 126Z"/><path d="M114 115 L124 119 L134 115 M124 119 V130" fill="none" stroke-width="1.1"/></g>
</svg>
<div style="position:absolute;left:1134.5px;top:239px;width:488px;height:97.5px;background:#fefee4;border:1px solid #d6d6c6;box-shadow:1px 1px 0 #c8c8b8,4px 4px 2.5px rgba(0,0,0,0.42)"></div>
<div style="position:absolute;left:1141.00px;top:246.94px;font-family:'Liberation Sans',sans-serif;font-size:18.60px;line-height:1;font-weight:bold;font-style:normal;color:#000;white-space:pre;font-kerning:none;transform:scaleX(0.9485);transform-origin:0 0;">Constrain tangent or collinear</div>
<div style="position:absolute;left:1398.50px;top:246.94px;font-family:'Liberation Sans',sans-serif;font-size:18.60px;line-height:1;font-weight:normal;font-style:normal;color:#111;white-space:pre;font-kerning:none;transform:scaleX(0.7534);transform-origin:0 0;">(T)</div>
<div style="position:absolute;left:1141.00px;top:282.27px;font-family:'Liberation Sans',sans-serif;font-size:16.57px;line-height:1;font-weight:normal;font-style:normal;color:#111;white-space:pre;font-kerning:none;transform:scaleX(1.0845);transform-origin:0 0;">Create a tangent or collinear constraint between two entities</div>
<div style="position:absolute;left:1141.00px;top:316.91px;font-family:'Liberation Sans',sans-serif;font-size:16.28px;line-height:1;font-weight:normal;font-style:italic;color:#111;white-space:pre;font-kerning:none;transform:scaleX(1.0398);transform-origin:0 0;">Sketcher_ConstrainTangent</div>
<div style="position:absolute;left:565.50px;top:372.65px;font-family:'Liberation Sans',sans-serif;font-size:38.66px;line-height:1;font-weight:bold;font-style:normal;color:#ea1c24;white-space:pre;font-kerning:none;transform:scaleX(0.9621);transform-origin:0 0;-webkit-text-stroke:0.4px #ea1c24">Select the "Collinear" tool</div>
<div style="position:absolute;left:925.50px;top:489.62px;font-family:'Liberation Sans',sans-serif;font-size:38.23px;line-height:1;font-weight:bold;font-style:normal;color:#ea1c24;white-space:pre;font-kerning:none;transform:scaleX(0.9707);transform-origin:0 0;-webkit-text-stroke:0.4px #ea1c24">Click on these two edges</div>
<svg style="position:absolute;left:0;top:0" width="1809" height="1099" viewBox="0 0 1809 1099"><g fill="none" stroke="#ea1c24" stroke-linecap="round" stroke-linejoin="round"><ellipse cx="1135.9" cy="219.9" rx="33.8" ry="29.9" stroke-width="7.5"/><path d="M1119.7 248.6 C1114.5 254.3 1108.9 259.8 1104.2 265.6 C1099.7 271.1 1095.4 276.5 1091.9 282.6 C1088.4 288.8 1085.1 295.9 1083.3 302.7 C1081.6 309.3 1081.2 315.9 1081.0 322.8 C1080.8 330.2 1082.0 338.3 1082.6 346.0 C1083.3 353.7 1085.7 363.0 1084.9 369.2 C1084.4 373.6 1083.5 377.2 1081.0 380.0 C1078.3 383.0 1073.5 384.7 1068.7 386.2 C1062.6 388.1 1054.2 388.3 1047.0 389.3" stroke-width="7"/><path d="M915.1 507.7 C900.1 505.7 886.2 503.2 870.2 501.8 C851.9 500.2 830.7 498.1 811.0 499.5 C791.2 500.9 770.2 504.6 751.9 510.1 C735.0 515.2 718.7 521.8 704.6 530.2 C691.3 538.1 679.1 548.0 669.1 558.6 C659.6 568.6 651.3 580.5 645.5 591.7 C640.3 601.8 636.8 611.8 634.8 622.4 C632.8 633.1 632.8 644.4 633.7 655.6 C634.6 667.3 637.5 680.3 640.7 691.0 C643.6 700.5 647.5 708.9 651.4 717.0 C655.0 724.6 659.3 731.2 663.2 738.3" stroke-width="8"/><path d="M614.7 699.3 L663.2 738.3 L660.4 689.9" stroke-width="8"/><path d="M1381.3 508.1 C1396.3 505.6 1410.5 502.8 1426.4 500.5 C1444.1 498.0 1463.9 494.7 1482.8 494.0 C1501.8 493.3 1521.3 493.3 1540.0 496.4 C1558.6 499.5 1578.4 504.3 1594.6 512.8 C1610.1 520.9 1625.0 532.5 1635.5 545.5 C1645.7 558.1 1653.7 576.9 1657.4 589.2 C1659.9 597.5 1660.0 603.7 1660.0 611.0 C1660.0 618.3 1659.9 624.5 1657.4 632.8 C1653.7 645.1 1643.2 664.3 1635.5 676.5 C1629.4 686.2 1623.1 693.0 1616.4 701.1 C1609.5 709.4 1601.8 716.4 1594.6 725.6 C1586.3 736.1 1578.2 749.3 1570.0 761.1" stroke-width="8"/><path d="M1583.7 717.5 L1570.5 760.5 L1621.9 737.9" stroke-width="8"/></g></svg>
</body></html>
